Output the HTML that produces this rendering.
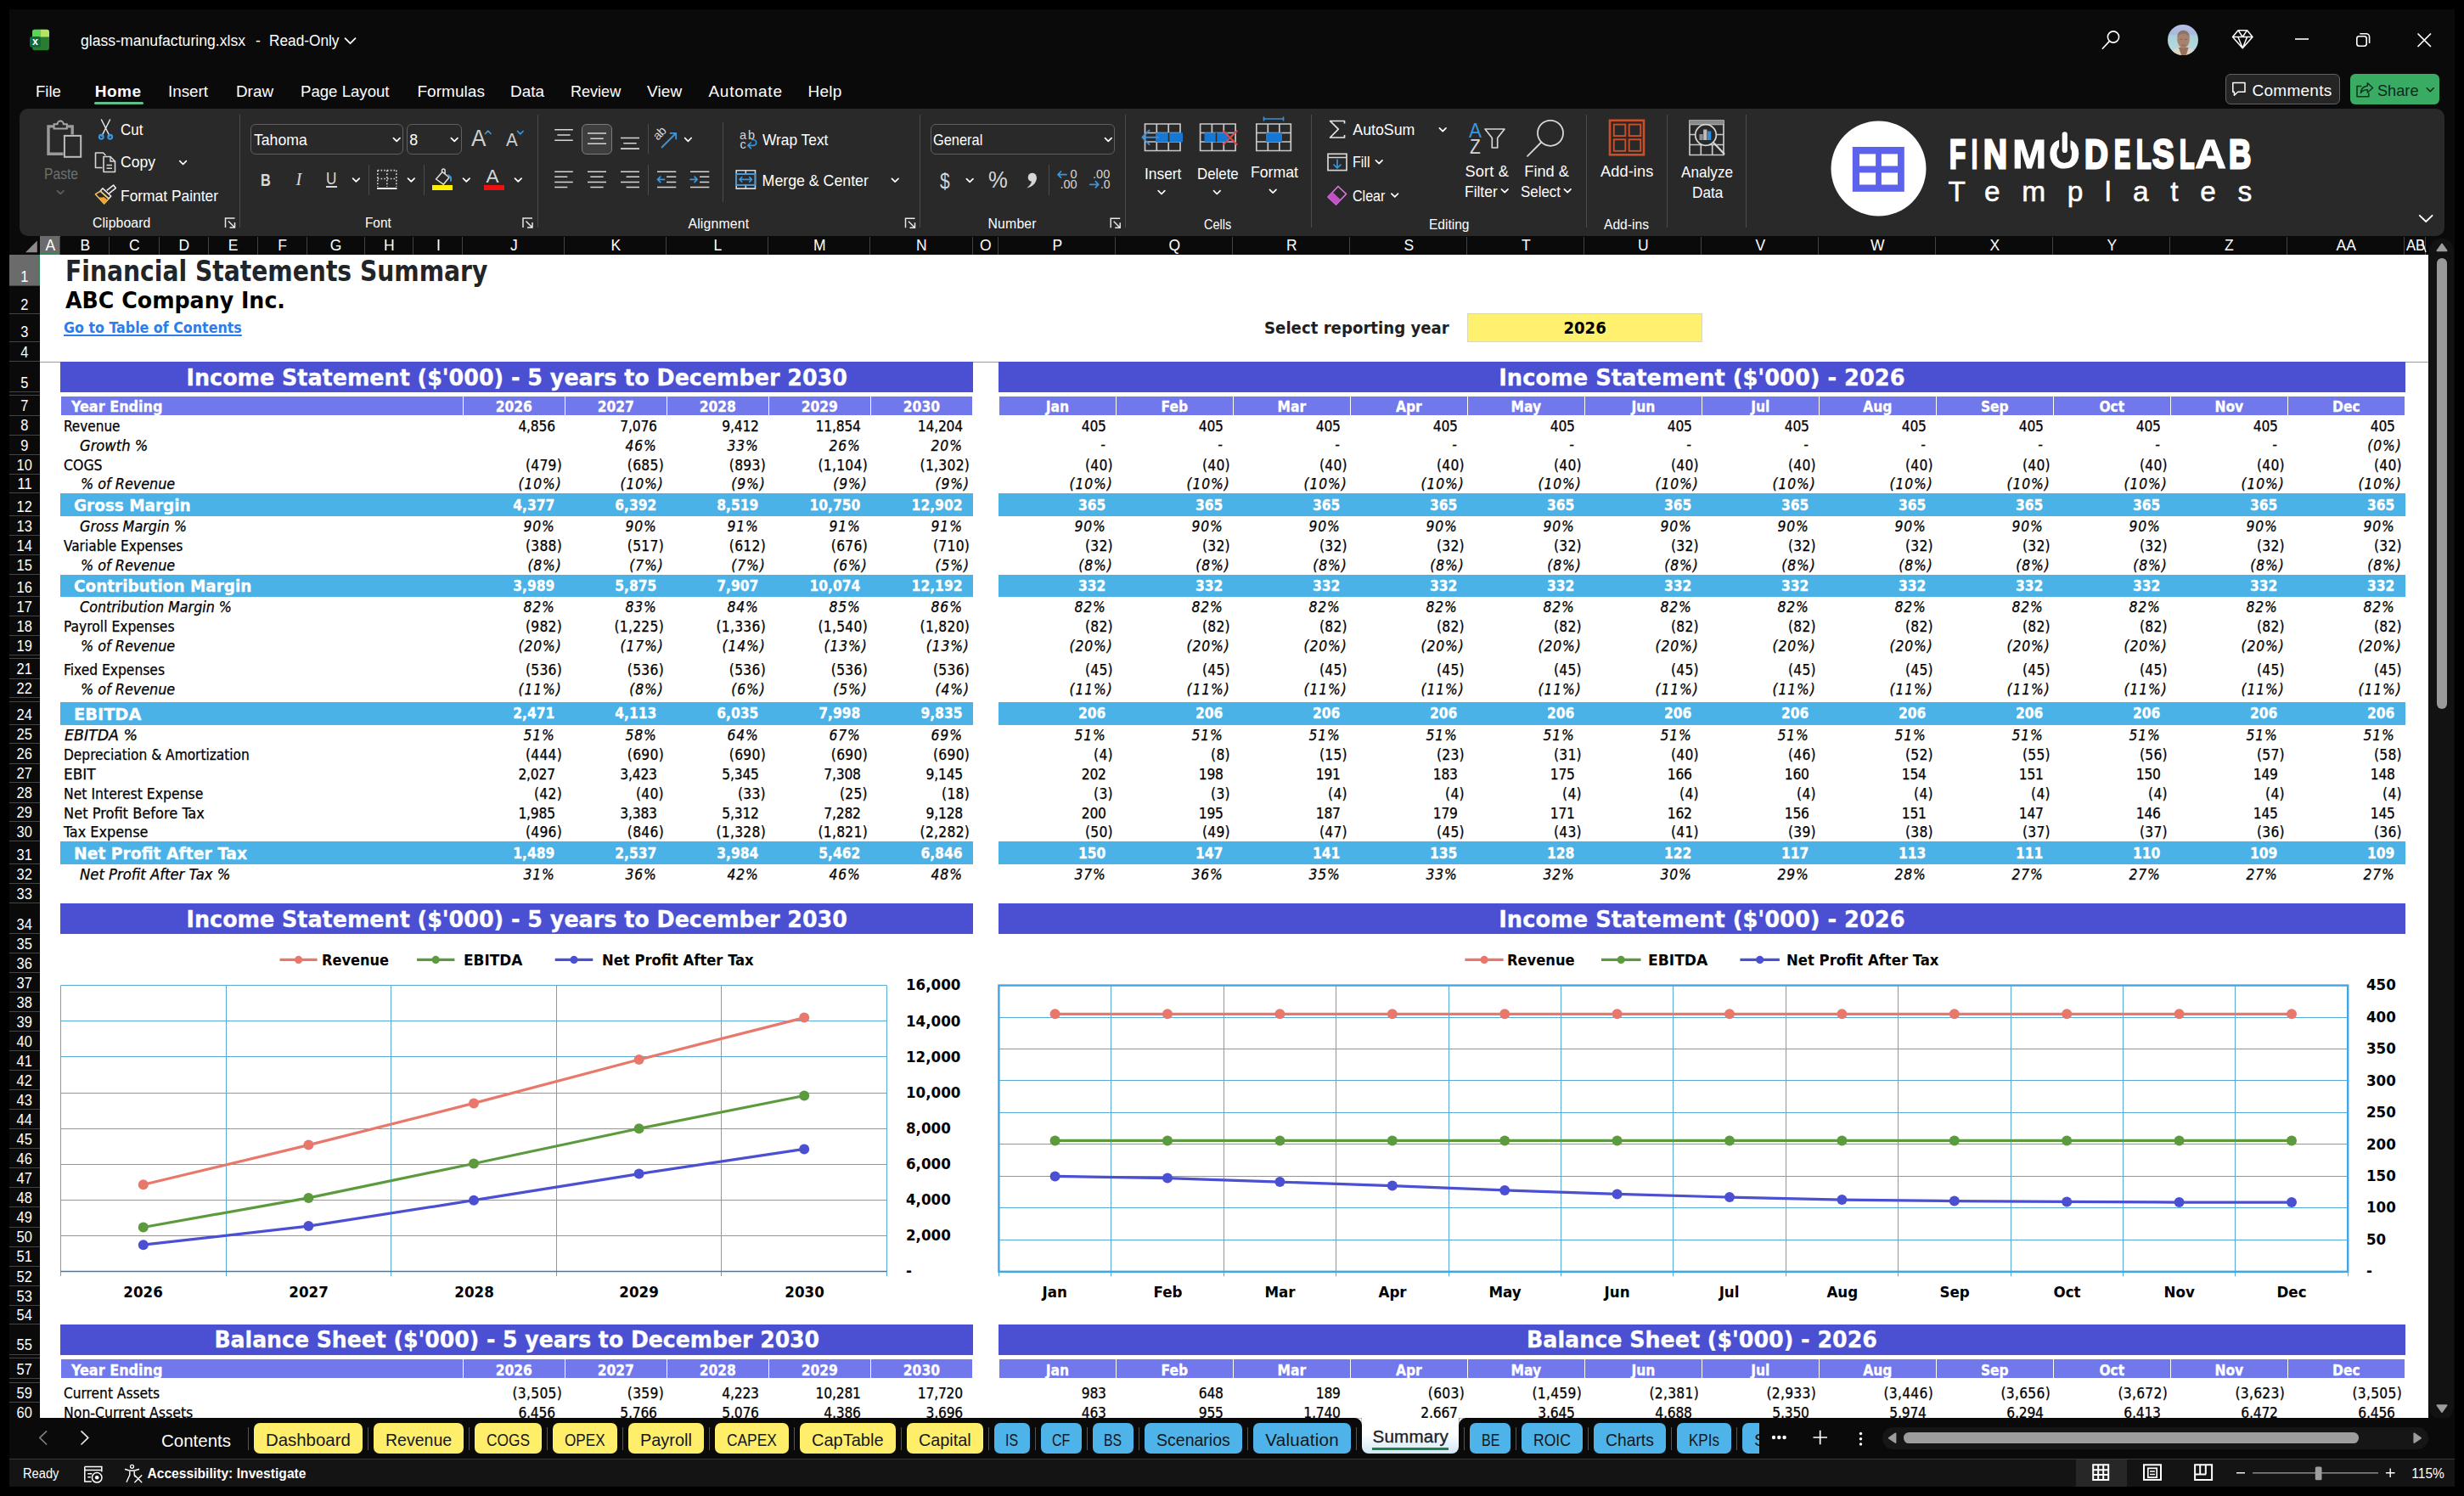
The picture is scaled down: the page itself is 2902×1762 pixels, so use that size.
<!DOCTYPE html>
<html lang="en"><head><meta charset="utf-8"><title>glass-manufacturing.xlsx - Excel</title>
<style>
html,body{margin:0;padding:0;background:#000;}
body{width:2902px;height:1762px;position:relative;overflow:hidden;font-family:'Liberation Sans',sans-serif;}
div{box-sizing:border-box;}
.t{position:absolute;white-space:pre;}
.b{position:absolute;}
.t0{font:17.6px/23px 'Liberation Sans',sans-serif;color:#fff;}
.t1{font:19px/25px 'Liberation Sans',sans-serif;color:#fff;}
.t2{font:normal bold 19px/25px 'Liberation Sans',sans-serif;color:#fff;}
.t3{font:19px/25px 'Liberation Sans',sans-serif;color:#0e2a18;}
.t4{font:17.5px/23px 'Liberation Sans',sans-serif;color:#fff;}
.t5{font:normal bold 33.5px/44px 'DejaVu Sans Condensed','DejaVu Sans','Liberation Sans',sans-serif;font-stretch:condensed;color:#212529;}
.t6{font:normal bold 26.5px/34px 'DejaVu Sans Condensed','DejaVu Sans','Liberation Sans',sans-serif;font-stretch:condensed;color:#000;}
.t7{font:normal bold 17.25px/22px 'DejaVu Sans Condensed','DejaVu Sans','Liberation Sans',sans-serif;font-stretch:condensed;color:#2b7de9;text-decoration:underline;text-decoration-thickness:1.5px;text-underline-offset:2px;}
.t8{font:normal bold 20.1px/26px 'DejaVu Sans Condensed','DejaVu Sans','Liberation Sans',sans-serif;font-stretch:condensed;color:#1f1f1f;}
.t9{font:normal bold 20.1px/26px 'DejaVu Sans Condensed','DejaVu Sans','Liberation Sans',sans-serif;font-stretch:condensed;color:#000;}
.t10{font:normal bold 26.8px/35px 'DejaVu Sans Condensed','DejaVu Sans','Liberation Sans',sans-serif;font-stretch:condensed;color:#fff;-webkit-text-stroke:0.300px #fff;}
.t11{font:normal bold 17.25px/22px 'DejaVu Sans Condensed','DejaVu Sans','Liberation Sans',sans-serif;font-stretch:condensed;color:#fff;-webkit-text-stroke:0.300px #fff;}
.t12{font:17.25px/22px 'DejaVu Sans Condensed','DejaVu Sans','Liberation Sans',sans-serif;font-stretch:condensed;color:#000;-webkit-text-stroke:0.250px #000;}
.t13{font:italic normal 17.25px/22px 'DejaVu Sans Condensed','DejaVu Sans','Liberation Sans',sans-serif;font-stretch:condensed;color:#000;-webkit-text-stroke:0.250px #000;}
.t14{font:normal bold 20.1px/26px 'DejaVu Sans Condensed','DejaVu Sans','Liberation Sans',sans-serif;font-stretch:condensed;color:#fff;-webkit-text-stroke:0.300px #fff;}
.t15{font:normal bold 18px/23px 'DejaVu Sans Condensed','DejaVu Sans','Liberation Sans',sans-serif;font-stretch:condensed;color:#000;}
.t16{font:18.400000000000002px/24px 'Liberation Sans',sans-serif;color:#6f6f6f;}
.t17{font:17.8px/23px 'Liberation Sans',sans-serif;color:#fff;}
.t18{font:15.8px/21px 'Liberation Sans',sans-serif;color:#fff;}
.t19{font:27.5px/36px 'Liberation Sans',sans-serif;color:#cfcfcf;}
.t20{font:21.5px/28px 'Liberation Sans',sans-serif;color:#cfcfcf;}
.t21{font:normal bold 20.5px/27px 'Liberation Sans',sans-serif;color:#d9d9d9;}
.t22{font:italic normal 20.5px/27px 'Liberation Serif',serif;color:#d9d9d9;}
.t23{font:19.5px/25px 'Liberation Sans',sans-serif;color:#d9d9d9;}
.t24{font:22.5px/29px 'Liberation Sans',sans-serif;color:#d6d6d6;}
.t25{font:14.5px/19px 'Liberation Sans',sans-serif;color:#d6d6d6;}
.t26{font:26px/34px 'Liberation Sans',sans-serif;color:#d6d6d6;}
.t27{font:27px/35px 'Liberation Sans',sans-serif;color:#d6d6d6;}
.t28{font:18.2px/24px 'Liberation Sans',sans-serif;color:#fff;}
.t29{font:23px/30px 'Liberation Sans',sans-serif;color:#3a96dd;}
.t30{font:23px/30px 'Liberation Sans',sans-serif;color:#d6d6d6;}
.t31{font:33.5px/44px 'Liberation Sans',sans-serif;color:#fff;-webkit-text-stroke:0.500px #fff;}
.t32{font:20.6px/27px 'Liberation Sans',sans-serif;color:#fff;}
.t33{font:20.6px/27px 'Liberation Sans',sans-serif;color:#14181c;}
.t34{font:20.6px/27px 'Liberation Sans',sans-serif;color:#1d2023;-webkit-text-stroke:0.350px #1d2023;}
.t35{font:15.6px/20px 'Liberation Sans',sans-serif;color:#fff;}
.t36{font:normal bold 15.6px/20px 'Liberation Sans',sans-serif;color:#fff;}
</style></head><body>
<div class="b" style="left:11.0px;top:11.0px;width:2880.0px;height:1740.0px;background:#0a0a0a;"></div>
<div class="t t0" style="left:95.0px;top:37.2px;letter-spacing:0.02px;">glass-manufacturing.xlsx</div>
<div class="t t0" style="left:301.0px;top:37.2px;">-</div>
<div class="t t0" style="left:317.0px;top:37.2px;transform:scaleX(0.9809);transform-origin:0 50%;">Read-Only</div>
<div class="t t1" style="left:42.3px;top:94.9px;transform:scaleX(0.9763);transform-origin:0 50%;">File</div>
<div class="t t2" style="left:111.7px;top:94.9px;letter-spacing:0.53px;">Home</div>
<div class="t t1" style="left:198.2px;top:94.9px;transform:scaleX(0.9888);transform-origin:0 50%;">Insert</div>
<div class="t t1" style="left:277.7px;top:94.9px;transform:scaleX(0.9922);transform-origin:0 50%;">Draw</div>
<div class="t t1" style="left:353.8px;top:94.9px;transform:scaleX(0.9794);transform-origin:0 50%;">Page Layout</div>
<div class="t t1" style="left:491.4px;top:94.9px;letter-spacing:0.06px;">Formulas</div>
<div class="t t1" style="left:600.5px;top:94.9px;transform:scaleX(0.9940);transform-origin:0 50%;">Data</div>
<div class="t t1" style="left:671.8px;top:94.9px;transform:scaleX(0.9501);transform-origin:0 50%;">Review</div>
<div class="t t1" style="left:762.0px;top:94.9px;letter-spacing:0.15px;">View</div>
<div class="t t1" style="left:834.4px;top:94.9px;letter-spacing:0.75px;">Automate</div>
<div class="t t1" style="left:951.6px;top:94.9px;letter-spacing:0.21px;">Help</div>
<div class="b" style="left:111.3px;top:120.2px;width:57.4px;height:2.9px;background:#5fc08b;border-radius:1.5px"></div>
<div class="b" style="left:2621.1px;top:87.0px;width:134.9px;height:35.8px;background:#252525;border:1px solid #616161;border-radius:6px"></div>
<div class="t t1" style="left:2652.4px;top:94.0px;letter-spacing:0.29px;">Comments</div>
<div class="b" style="left:2768.2px;top:87.0px;width:105.0px;height:35.8px;background:#3aab63;border-radius:6px"></div>
<div class="t t3" style="left:2799.5px;top:94.0px;transform:scaleX(0.9565);transform-origin:0 50%;">Share</div>
<div class="b" style="left:47.1px;top:300.2px;width:2813.4px;height:1370.0px;background:#fff;"></div>
<div class="b" style="left:11.0px;top:278.0px;width:2850.0px;height:22.2px;background:#0a0a0a;"></div>
<div class="b" style="left:47.1px;top:278.0px;width:24.3px;height:22.2px;background:#6b6b6b;border-bottom:2px solid #2e8b57"></div>
<div class="t t4" style="left:53.4px;top:278.4px;">A</div>
<div class="b" style="left:70.0px;top:279.0px;width:1.0px;height:21.0px;background:#444;"></div>
<div class="t t4" style="left:94.5px;top:278.4px;">B</div>
<div class="b" style="left:128.0px;top:279.0px;width:1.0px;height:21.0px;background:#444;"></div>
<div class="t t4" style="left:152.1px;top:278.4px;">C</div>
<div class="b" style="left:187.0px;top:279.0px;width:1.0px;height:21.0px;background:#444;"></div>
<div class="t t4" style="left:210.4px;top:278.4px;">D</div>
<div class="b" style="left:245.0px;top:279.0px;width:1.0px;height:21.0px;background:#444;"></div>
<div class="t t4" style="left:268.8px;top:278.4px;">E</div>
<div class="b" style="left:303.0px;top:279.0px;width:1.0px;height:21.0px;background:#444;"></div>
<div class="t t4" style="left:327.2px;top:278.4px;">F</div>
<div class="b" style="left:361.0px;top:279.0px;width:1.0px;height:21.0px;background:#444;"></div>
<div class="t t4" style="left:388.8px;top:278.4px;">G</div>
<div class="b" style="left:429.0px;top:279.0px;width:1.0px;height:21.0px;background:#444;"></div>
<div class="t t4" style="left:452.1px;top:278.4px;">H</div>
<div class="b" style="left:486.0px;top:279.0px;width:1.0px;height:21.0px;background:#444;"></div>
<div class="t t4" style="left:513.9px;top:278.4px;">I</div>
<div class="b" style="left:544.0px;top:279.0px;width:1.0px;height:21.0px;background:#444;"></div>
<div class="t t4" style="left:601.0px;top:278.4px;">J</div>
<div class="b" style="left:664.0px;top:279.0px;width:1.0px;height:21.0px;background:#444;"></div>
<div class="t t4" style="left:719.5px;top:278.4px;">K</div>
<div class="b" style="left:784.0px;top:279.0px;width:1.0px;height:21.0px;background:#444;"></div>
<div class="t t4" style="left:840.4px;top:278.4px;">L</div>
<div class="b" style="left:904.0px;top:279.0px;width:1.0px;height:21.0px;background:#444;"></div>
<div class="t t4" style="left:958.0px;top:278.4px;">M</div>
<div class="b" style="left:1024.0px;top:279.0px;width:1.0px;height:21.0px;background:#444;"></div>
<div class="t t4" style="left:1079.1px;top:278.4px;">N</div>
<div class="b" style="left:1145.0px;top:279.0px;width:1.0px;height:21.0px;background:#444;"></div>
<div class="t t4" style="left:1154.1px;top:278.4px;">O</div>
<div class="b" style="left:1175.0px;top:279.0px;width:1.0px;height:21.0px;background:#444;"></div>
<div class="t t4" style="left:1239.5px;top:278.4px;">P</div>
<div class="b" style="left:1313.0px;top:279.0px;width:1.0px;height:21.0px;background:#444;"></div>
<div class="t t4" style="left:1376.5px;top:278.4px;">Q</div>
<div class="b" style="left:1451.0px;top:279.0px;width:1.0px;height:21.0px;background:#444;"></div>
<div class="t t4" style="left:1515.0px;top:278.4px;">R</div>
<div class="b" style="left:1589.0px;top:279.0px;width:1.0px;height:21.0px;background:#444;"></div>
<div class="t t4" style="left:1653.5px;top:278.4px;">S</div>
<div class="b" style="left:1727.0px;top:279.0px;width:1.0px;height:21.0px;background:#444;"></div>
<div class="t t4" style="left:1791.9px;top:278.4px;">T</div>
<div class="b" style="left:1865.0px;top:279.0px;width:1.0px;height:21.0px;background:#444;"></div>
<div class="t t4" style="left:1929.0px;top:278.4px;">U</div>
<div class="b" style="left:2003.0px;top:279.0px;width:1.0px;height:21.0px;background:#444;"></div>
<div class="t t4" style="left:2067.5px;top:278.4px;">V</div>
<div class="b" style="left:2141.0px;top:279.0px;width:1.0px;height:21.0px;background:#444;"></div>
<div class="t t4" style="left:2203.0px;top:278.4px;">W</div>
<div class="b" style="left:2279.0px;top:279.0px;width:1.0px;height:21.0px;background:#444;"></div>
<div class="t t4" style="left:2343.5px;top:278.4px;">X</div>
<div class="b" style="left:2417.0px;top:279.0px;width:1.0px;height:21.0px;background:#444;"></div>
<div class="t t4" style="left:2481.5px;top:278.4px;">Y</div>
<div class="b" style="left:2555.0px;top:279.0px;width:1.0px;height:21.0px;background:#444;"></div>
<div class="t t4" style="left:2619.9px;top:278.4px;">Z</div>
<div class="b" style="left:2693.0px;top:279.0px;width:1.0px;height:21.0px;background:#444;"></div>
<div class="t t4" style="left:2751.6px;top:278.4px;">AA</div>
<div class="b" style="left:2831.0px;top:279.0px;width:1.0px;height:21.0px;background:#444;"></div>
<div class="t t4" style="left:2833.8px;top:278.4px;transform:scaleX(0.9504);transform-origin:0 50%;">AB</div>
<div class="b" style="left:2856.0px;top:279.0px;width:1.0px;height:21.0px;background:#444;"></div>
<div class="b" style="left:2857.0px;top:278.0px;width:3.5px;height:22.2px;background:#0a0a0a;"></div>
<div class="b" style="left:11.0px;top:300.2px;width:36.1px;height:1370.0px;background:#0a0a0a;"></div>
<div class="b" style="left:11.0px;top:300.2px;width:36.1px;height:36.9px;background:#6b6b6b;border-right:2px solid #2e8b57"></div>
<div class="t t4" style="left:24.1px;top:314.9px;transform:scaleX(0.9400);transform-origin:50% 50%;">1</div>
<div class="b" style="left:11.0px;top:336.0px;width:36.1px;height:1.0px;background:#444;"></div>
<div class="t t4" style="left:24.1px;top:347.5px;transform:scaleX(0.9400);transform-origin:50% 50%;">2</div>
<div class="b" style="left:11.0px;top:369.0px;width:36.1px;height:1.0px;background:#444;"></div>
<div class="t t4" style="left:24.1px;top:380.4px;transform:scaleX(0.9400);transform-origin:50% 50%;">3</div>
<div class="b" style="left:11.0px;top:402.0px;width:36.1px;height:1.0px;background:#444;"></div>
<div class="t t4" style="left:24.1px;top:404.2px;transform:scaleX(0.9400);transform-origin:50% 50%;">4</div>
<div class="b" style="left:11.0px;top:425.0px;width:36.1px;height:1.0px;background:#444;"></div>
<div class="t t4" style="left:24.1px;top:439.8px;transform:scaleX(0.9400);transform-origin:50% 50%;">5</div>
<div class="b" style="left:11.0px;top:461.0px;width:36.1px;height:1.0px;background:#444;"></div>
<div class="b" style="left:11.0px;top:465.0px;width:36.1px;height:1.0px;background:#444;"></div>
<div class="t t4" style="left:24.1px;top:467.3px;transform:scaleX(0.9400);transform-origin:50% 50%;">7</div>
<div class="b" style="left:11.0px;top:489.0px;width:36.1px;height:1.0px;background:#444;"></div>
<div class="t t4" style="left:24.1px;top:490.4px;transform:scaleX(0.9400);transform-origin:50% 50%;">8</div>
<div class="b" style="left:11.0px;top:512.0px;width:36.1px;height:1.0px;background:#444;"></div>
<div class="t t4" style="left:24.1px;top:513.5px;transform:scaleX(0.9400);transform-origin:50% 50%;">9</div>
<div class="b" style="left:11.0px;top:535.0px;width:36.1px;height:1.0px;background:#444;"></div>
<div class="t t4" style="left:19.3px;top:536.6px;transform:scaleX(0.9400);transform-origin:50% 50%;">10</div>
<div class="b" style="left:11.0px;top:558.0px;width:36.1px;height:1.0px;background:#444;"></div>
<div class="t t4" style="left:19.9px;top:559.1px;transform:scaleX(0.9400);transform-origin:50% 50%;">11</div>
<div class="b" style="left:11.0px;top:580.0px;width:36.1px;height:1.0px;background:#444;"></div>
<div class="t t4" style="left:19.3px;top:585.8px;transform:scaleX(0.9400);transform-origin:50% 50%;">12</div>
<div class="b" style="left:11.0px;top:607.0px;width:36.1px;height:1.0px;background:#444;"></div>
<div class="t t4" style="left:19.3px;top:608.8px;transform:scaleX(0.9400);transform-origin:50% 50%;">13</div>
<div class="b" style="left:11.0px;top:630.0px;width:36.1px;height:1.0px;background:#444;"></div>
<div class="t t4" style="left:19.3px;top:631.8px;transform:scaleX(0.9400);transform-origin:50% 50%;">14</div>
<div class="b" style="left:11.0px;top:653.0px;width:36.1px;height:1.0px;background:#444;"></div>
<div class="t t4" style="left:19.3px;top:654.5px;transform:scaleX(0.9400);transform-origin:50% 50%;">15</div>
<div class="b" style="left:11.0px;top:676.0px;width:36.1px;height:1.0px;background:#444;"></div>
<div class="t t4" style="left:19.3px;top:680.8px;transform:scaleX(0.9400);transform-origin:50% 50%;">16</div>
<div class="b" style="left:11.0px;top:702.0px;width:36.1px;height:1.0px;background:#444;"></div>
<div class="t t4" style="left:19.3px;top:703.8px;transform:scaleX(0.9400);transform-origin:50% 50%;">17</div>
<div class="b" style="left:11.0px;top:725.0px;width:36.1px;height:1.0px;background:#444;"></div>
<div class="t t4" style="left:19.3px;top:726.8px;transform:scaleX(0.9400);transform-origin:50% 50%;">18</div>
<div class="b" style="left:11.0px;top:748.0px;width:36.1px;height:1.0px;background:#444;"></div>
<div class="t t4" style="left:19.3px;top:749.8px;transform:scaleX(0.9400);transform-origin:50% 50%;">19</div>
<div class="b" style="left:11.0px;top:771.0px;width:36.1px;height:1.0px;background:#444;"></div>
<div class="b" style="left:11.0px;top:775.0px;width:36.1px;height:1.0px;background:#444;"></div>
<div class="t t4" style="left:19.3px;top:777.3px;transform:scaleX(0.9400);transform-origin:50% 50%;">21</div>
<div class="b" style="left:11.0px;top:799.0px;width:36.1px;height:1.0px;background:#444;"></div>
<div class="t t4" style="left:19.3px;top:800.3px;transform:scaleX(0.9400);transform-origin:50% 50%;">22</div>
<div class="b" style="left:11.0px;top:821.0px;width:36.1px;height:1.0px;background:#444;"></div>
<div class="b" style="left:11.0px;top:826.0px;width:36.1px;height:1.0px;background:#444;"></div>
<div class="t t4" style="left:19.3px;top:831.3px;transform:scaleX(0.9400);transform-origin:50% 50%;">24</div>
<div class="b" style="left:11.0px;top:853.0px;width:36.1px;height:1.0px;background:#444;"></div>
<div class="t t4" style="left:19.3px;top:854.3px;transform:scaleX(0.9400);transform-origin:50% 50%;">25</div>
<div class="b" style="left:11.0px;top:875.0px;width:36.1px;height:1.0px;background:#444;"></div>
<div class="t t4" style="left:19.3px;top:877.3px;transform:scaleX(0.9400);transform-origin:50% 50%;">26</div>
<div class="b" style="left:11.0px;top:899.0px;width:36.1px;height:1.0px;background:#444;"></div>
<div class="t t4" style="left:19.3px;top:900.3px;transform:scaleX(0.9400);transform-origin:50% 50%;">27</div>
<div class="b" style="left:11.0px;top:921.0px;width:36.1px;height:1.0px;background:#444;"></div>
<div class="t t4" style="left:19.3px;top:923.3px;transform:scaleX(0.9400);transform-origin:50% 50%;">28</div>
<div class="b" style="left:11.0px;top:945.0px;width:36.1px;height:1.0px;background:#444;"></div>
<div class="t t4" style="left:19.3px;top:946.3px;transform:scaleX(0.9400);transform-origin:50% 50%;">29</div>
<div class="b" style="left:11.0px;top:967.0px;width:36.1px;height:1.0px;background:#444;"></div>
<div class="t t4" style="left:19.3px;top:969.0px;transform:scaleX(0.9400);transform-origin:50% 50%;">30</div>
<div class="b" style="left:11.0px;top:990.0px;width:36.1px;height:1.0px;background:#444;"></div>
<div class="t t4" style="left:19.3px;top:995.6px;transform:scaleX(0.9400);transform-origin:50% 50%;">31</div>
<div class="b" style="left:11.0px;top:1017.0px;width:36.1px;height:1.0px;background:#444;"></div>
<div class="t t4" style="left:19.3px;top:1018.8px;transform:scaleX(0.9400);transform-origin:50% 50%;">32</div>
<div class="b" style="left:11.0px;top:1040.0px;width:36.1px;height:1.0px;background:#444;"></div>
<div class="t t4" style="left:19.3px;top:1041.8px;transform:scaleX(0.9400);transform-origin:50% 50%;">33</div>
<div class="b" style="left:11.0px;top:1063.0px;width:36.1px;height:1.0px;background:#444;"></div>
<div class="t t4" style="left:19.3px;top:1077.8px;transform:scaleX(0.9400);transform-origin:50% 50%;">34</div>
<div class="b" style="left:11.0px;top:1099.0px;width:36.1px;height:1.0px;background:#444;"></div>
<div class="t t4" style="left:19.3px;top:1100.9px;transform:scaleX(0.9400);transform-origin:50% 50%;">35</div>
<div class="b" style="left:11.0px;top:1122.0px;width:36.1px;height:1.0px;background:#444;"></div>
<div class="t t4" style="left:19.3px;top:1123.9px;transform:scaleX(0.9400);transform-origin:50% 50%;">36</div>
<div class="b" style="left:11.0px;top:1145.0px;width:36.1px;height:1.0px;background:#444;"></div>
<div class="t t4" style="left:19.3px;top:1147.0px;transform:scaleX(0.9400);transform-origin:50% 50%;">37</div>
<div class="b" style="left:11.0px;top:1168.0px;width:36.1px;height:1.0px;background:#444;"></div>
<div class="t t4" style="left:19.3px;top:1170.0px;transform:scaleX(0.9400);transform-origin:50% 50%;">38</div>
<div class="b" style="left:11.0px;top:1191.0px;width:36.1px;height:1.0px;background:#444;"></div>
<div class="t t4" style="left:19.3px;top:1193.0px;transform:scaleX(0.9400);transform-origin:50% 50%;">39</div>
<div class="b" style="left:11.0px;top:1214.0px;width:36.1px;height:1.0px;background:#444;"></div>
<div class="t t4" style="left:19.3px;top:1216.1px;transform:scaleX(0.9400);transform-origin:50% 50%;">40</div>
<div class="b" style="left:11.0px;top:1237.0px;width:36.1px;height:1.0px;background:#444;"></div>
<div class="t t4" style="left:19.3px;top:1239.1px;transform:scaleX(0.9400);transform-origin:50% 50%;">41</div>
<div class="b" style="left:11.0px;top:1260.0px;width:36.1px;height:1.0px;background:#444;"></div>
<div class="t t4" style="left:19.3px;top:1262.1px;transform:scaleX(0.9400);transform-origin:50% 50%;">42</div>
<div class="b" style="left:11.0px;top:1283.0px;width:36.1px;height:1.0px;background:#444;"></div>
<div class="t t4" style="left:19.3px;top:1285.2px;transform:scaleX(0.9400);transform-origin:50% 50%;">43</div>
<div class="b" style="left:11.0px;top:1306.0px;width:36.1px;height:1.0px;background:#444;"></div>
<div class="t t4" style="left:19.3px;top:1308.2px;transform:scaleX(0.9400);transform-origin:50% 50%;">44</div>
<div class="b" style="left:11.0px;top:1329.0px;width:36.1px;height:1.0px;background:#444;"></div>
<div class="t t4" style="left:19.3px;top:1331.2px;transform:scaleX(0.9400);transform-origin:50% 50%;">45</div>
<div class="b" style="left:11.0px;top:1352.0px;width:36.1px;height:1.0px;background:#444;"></div>
<div class="t t4" style="left:19.3px;top:1354.3px;transform:scaleX(0.9400);transform-origin:50% 50%;">46</div>
<div class="b" style="left:11.0px;top:1375.0px;width:36.1px;height:1.0px;background:#444;"></div>
<div class="t t4" style="left:19.3px;top:1377.3px;transform:scaleX(0.9400);transform-origin:50% 50%;">47</div>
<div class="b" style="left:11.0px;top:1398.0px;width:36.1px;height:1.0px;background:#444;"></div>
<div class="t t4" style="left:19.3px;top:1400.3px;transform:scaleX(0.9400);transform-origin:50% 50%;">48</div>
<div class="b" style="left:11.0px;top:1421.0px;width:36.1px;height:1.0px;background:#444;"></div>
<div class="t t4" style="left:19.3px;top:1423.4px;transform:scaleX(0.9400);transform-origin:50% 50%;">49</div>
<div class="b" style="left:11.0px;top:1445.0px;width:36.1px;height:1.0px;background:#444;"></div>
<div class="t t4" style="left:19.3px;top:1446.4px;transform:scaleX(0.9400);transform-origin:50% 50%;">50</div>
<div class="b" style="left:11.0px;top:1468.0px;width:36.1px;height:1.0px;background:#444;"></div>
<div class="t t4" style="left:19.3px;top:1469.4px;transform:scaleX(0.9400);transform-origin:50% 50%;">51</div>
<div class="b" style="left:11.0px;top:1491.0px;width:36.1px;height:1.0px;background:#444;"></div>
<div class="t t4" style="left:19.3px;top:1492.5px;transform:scaleX(0.9400);transform-origin:50% 50%;">52</div>
<div class="b" style="left:11.0px;top:1514.0px;width:36.1px;height:1.0px;background:#444;"></div>
<div class="t t4" style="left:19.3px;top:1515.5px;transform:scaleX(0.9400);transform-origin:50% 50%;">53</div>
<div class="b" style="left:11.0px;top:1537.0px;width:36.1px;height:1.0px;background:#444;"></div>
<div class="t t4" style="left:19.3px;top:1538.2px;transform:scaleX(0.9400);transform-origin:50% 50%;">54</div>
<div class="b" style="left:11.0px;top:1559.0px;width:36.1px;height:1.0px;background:#444;"></div>
<div class="t t4" style="left:19.3px;top:1573.3px;transform:scaleX(0.9400);transform-origin:50% 50%;">55</div>
<div class="b" style="left:11.0px;top:1595.0px;width:36.1px;height:1.0px;background:#444;"></div>
<div class="b" style="left:11.0px;top:1599.0px;width:36.1px;height:1.0px;background:#444;"></div>
<div class="t t4" style="left:19.3px;top:1601.6px;transform:scaleX(0.9400);transform-origin:50% 50%;">57</div>
<div class="b" style="left:11.0px;top:1623.0px;width:36.1px;height:1.0px;background:#444;"></div>
<div class="b" style="left:11.0px;top:1628.0px;width:36.1px;height:1.0px;background:#444;"></div>
<div class="t t4" style="left:19.3px;top:1629.8px;transform:scaleX(0.9400);transform-origin:50% 50%;">59</div>
<div class="b" style="left:11.0px;top:1651.0px;width:36.1px;height:1.0px;background:#444;"></div>
<div class="t t4" style="left:19.3px;top:1652.8px;transform:scaleX(0.9400);transform-origin:50% 50%;">60</div>
<div class="b" style="left:47.1px;top:425.9px;width:2813.4px;height:1.1px;background:#9a9a9a;"></div>
<div class="t t5" style="left:77.3px;top:297.6px;transform:scaleX(0.9353);transform-origin:0 50%;">Financial Statements Summary</div>
<div class="t t6" style="left:77.0px;top:337.4px;transform:scaleX(1.0609);transform-origin:0 50%;">ABC Company Inc.</div>
<div class="t t7" style="left:75.2px;top:374.6px;transform:scaleX(1.0232);transform-origin:0 50%;">Go to Table of Contents</div>
<div class="t t8" style="left:1488.6px;top:373.2px;transform:scaleX(1.0039);transform-origin:0 50%;">Select reporting year</div>
<div class="b" style="left:1728.4px;top:368.9px;width:276.4px;height:33.7px;background:#fff06e;border:1px solid #d8d8c0"></div>
<div class="t t9" style="left:1841.4px;top:373.2px;">2026</div>
<div class="b" style="left:71.4px;top:426.4px;width:1074.3px;height:35.8px;background:#4b50d2;"></div>
<div class="t t10" style="left:238.8px;top:426.6px;transform:scaleX(1.0525);transform-origin:50% 50%;">Income Statement ($&#x27;000) - 5 years to December 2030</div>
<div class="b" style="left:1176.3px;top:426.4px;width:1656.5px;height:35.8px;background:#4b50d2;"></div>
<div class="t t10" style="left:1780.1px;top:426.6px;transform:scaleX(1.0654);transform-origin:50% 50%;">Income Statement ($&#x27;000) - 2026</div>
<div class="b" style="left:72.2px;top:467.3px;width:472.5px;height:21.5px;background:#7078eb;"></div>
<div class="t t11" style="left:83.6px;top:468.2px;transform:scaleX(1.0341);transform-origin:0 50%;">Year Ending</div>
<div class="b" style="left:545.8px;top:467.3px;width:119.0px;height:21.5px;background:#7078eb;"></div>
<div class="t t11" style="left:583.7px;top:468.2px;">2026</div>
<div class="b" style="left:665.9px;top:467.3px;width:118.8px;height:21.5px;background:#7078eb;"></div>
<div class="t t11" style="left:703.7px;top:468.2px;">2027</div>
<div class="b" style="left:785.8px;top:467.3px;width:118.9px;height:21.5px;background:#7078eb;"></div>
<div class="t t11" style="left:823.7px;top:468.2px;">2028</div>
<div class="b" style="left:905.8px;top:467.3px;width:118.9px;height:21.5px;background:#7078eb;"></div>
<div class="t t11" style="left:943.7px;top:468.2px;">2029</div>
<div class="b" style="left:1025.8px;top:467.3px;width:119.1px;height:21.5px;background:#7078eb;"></div>
<div class="t t11" style="left:1063.8px;top:468.2px;">2030</div>
<div class="b" style="left:1176.9px;top:467.3px;width:136.8px;height:21.5px;background:#7078eb;"></div>
<div class="t t11" style="left:1231.7px;top:468.2px;">Jan</div>
<div class="b" style="left:1314.9px;top:467.3px;width:136.8px;height:21.5px;background:#7078eb;"></div>
<div class="t t11" style="left:1367.5px;top:468.2px;">Feb</div>
<div class="b" style="left:1452.9px;top:467.3px;width:136.8px;height:21.5px;background:#7078eb;"></div>
<div class="t t11" style="left:1504.5px;top:468.2px;">Mar</div>
<div class="b" style="left:1590.9px;top:467.3px;width:136.8px;height:21.5px;background:#7078eb;"></div>
<div class="t t11" style="left:1643.9px;top:468.2px;">Apr</div>
<div class="b" style="left:1728.9px;top:467.3px;width:136.8px;height:21.5px;background:#7078eb;"></div>
<div class="t t11" style="left:1779.5px;top:468.2px;">May</div>
<div class="b" style="left:1866.9px;top:467.3px;width:136.8px;height:21.5px;background:#7078eb;"></div>
<div class="t t11" style="left:1921.4px;top:468.2px;">Jun</div>
<div class="b" style="left:2004.9px;top:467.3px;width:136.8px;height:21.5px;background:#7078eb;"></div>
<div class="t t11" style="left:2062.2px;top:468.2px;">Jul</div>
<div class="b" style="left:2142.9px;top:467.3px;width:136.8px;height:21.5px;background:#7078eb;"></div>
<div class="t t11" style="left:2194.2px;top:468.2px;">Aug</div>
<div class="b" style="left:2280.9px;top:467.3px;width:136.8px;height:21.5px;background:#7078eb;"></div>
<div class="t t11" style="left:2332.9px;top:468.2px;">Sep</div>
<div class="b" style="left:2418.9px;top:467.3px;width:136.8px;height:21.5px;background:#7078eb;"></div>
<div class="t t11" style="left:2472.4px;top:468.2px;">Oct</div>
<div class="b" style="left:2556.9px;top:467.3px;width:136.8px;height:21.5px;background:#7078eb;"></div>
<div class="t t11" style="left:2608.4px;top:468.2px;">Nov</div>
<div class="b" style="left:2694.9px;top:467.3px;width:136.8px;height:21.5px;background:#7078eb;"></div>
<div class="t t11" style="left:2747.0px;top:468.2px;">Dec</div>
<div class="t t12" style="left:75.4px;top:490.6px;transform:scaleX(0.9847);transform-origin:0 50%;">Revenue</div>
<div class="t t12" style="left:610.4px;top:490.6px;letter-spacing:-0.18px;">4,856</div>
<div class="t t12" style="left:730.3px;top:490.6px;letter-spacing:-0.18px;">7,076</div>
<div class="t t12" style="left:850.3px;top:490.6px;letter-spacing:-0.18px;">9,412</div>
<div class="t t12" style="left:960.6px;top:490.6px;letter-spacing:-0.18px;">11,854</div>
<div class="t t12" style="left:1080.8px;top:490.6px;letter-spacing:-0.18px;">14,204</div>
<div class="t t12" style="left:1273.7px;top:490.6px;letter-spacing:-0.18px;">405</div>
<div class="t t12" style="left:1411.7px;top:490.6px;letter-spacing:-0.18px;">405</div>
<div class="t t12" style="left:1549.7px;top:490.6px;letter-spacing:-0.18px;">405</div>
<div class="t t12" style="left:1687.7px;top:490.6px;letter-spacing:-0.18px;">405</div>
<div class="t t12" style="left:1825.7px;top:490.6px;letter-spacing:-0.18px;">405</div>
<div class="t t12" style="left:1963.7px;top:490.6px;letter-spacing:-0.18px;">405</div>
<div class="t t12" style="left:2101.7px;top:490.6px;letter-spacing:-0.18px;">405</div>
<div class="t t12" style="left:2239.7px;top:490.6px;letter-spacing:-0.18px;">405</div>
<div class="t t12" style="left:2377.7px;top:490.6px;letter-spacing:-0.18px;">405</div>
<div class="t t12" style="left:2515.7px;top:490.6px;letter-spacing:-0.18px;">405</div>
<div class="t t12" style="left:2653.7px;top:490.6px;letter-spacing:-0.18px;">405</div>
<div class="t t12" style="left:2791.7px;top:490.6px;letter-spacing:-0.18px;">405</div>
<div class="t t13" style="left:93.8px;top:513.7px;transform:scaleX(1.0527);transform-origin:0 50%;">Growth %</div>
<div class="t t13" style="left:736.4px;top:513.7px;letter-spacing:0.90px;">46%</div>
<div class="t t13" style="left:856.4px;top:513.7px;letter-spacing:0.90px;">33%</div>
<div class="t t13" style="left:976.4px;top:513.7px;letter-spacing:0.90px;">26%</div>
<div class="t t13" style="left:1096.6px;top:513.7px;letter-spacing:0.90px;">20%</div>
<div class="t t13" style="left:1296.2px;top:511.9px;letter-spacing:0.90px;">-</div>
<div class="t t13" style="left:1434.2px;top:511.9px;letter-spacing:0.90px;">-</div>
<div class="t t13" style="left:1572.2px;top:511.9px;letter-spacing:0.90px;">-</div>
<div class="t t13" style="left:1710.2px;top:511.9px;letter-spacing:0.90px;">-</div>
<div class="t t13" style="left:1848.2px;top:511.9px;letter-spacing:0.90px;">-</div>
<div class="t t13" style="left:1986.2px;top:511.9px;letter-spacing:0.90px;">-</div>
<div class="t t13" style="left:2124.2px;top:511.9px;letter-spacing:0.90px;">-</div>
<div class="t t13" style="left:2262.2px;top:511.9px;letter-spacing:0.90px;">-</div>
<div class="t t13" style="left:2400.2px;top:511.9px;letter-spacing:0.90px;">-</div>
<div class="t t13" style="left:2538.2px;top:511.9px;letter-spacing:0.90px;">-</div>
<div class="t t13" style="left:2676.2px;top:511.9px;letter-spacing:0.90px;">-</div>
<div class="t t13" style="left:2788.3px;top:513.7px;letter-spacing:0.90px;">(0%)</div>
<div class="t t12" style="left:75.4px;top:536.8px;transform:scaleX(1.0147);transform-origin:0 50%;">COGS</div>
<div class="t t12" style="left:618.9px;top:536.8px;letter-spacing:0.30px;">(479)</div>
<div class="t t12" style="left:738.8px;top:536.8px;letter-spacing:0.30px;">(685)</div>
<div class="t t12" style="left:858.8px;top:536.8px;letter-spacing:0.30px;">(893)</div>
<div class="t t12" style="left:963.4px;top:536.8px;letter-spacing:0.30px;">(1,104)</div>
<div class="t t12" style="left:1083.6px;top:536.8px;letter-spacing:0.30px;">(1,302)</div>
<div class="t t12" style="left:1277.9px;top:536.8px;letter-spacing:0.30px;">(40)</div>
<div class="t t12" style="left:1415.9px;top:536.8px;letter-spacing:0.30px;">(40)</div>
<div class="t t12" style="left:1553.9px;top:536.8px;letter-spacing:0.30px;">(40)</div>
<div class="t t12" style="left:1691.9px;top:536.8px;letter-spacing:0.30px;">(40)</div>
<div class="t t12" style="left:1829.9px;top:536.8px;letter-spacing:0.30px;">(40)</div>
<div class="t t12" style="left:1967.9px;top:536.8px;letter-spacing:0.30px;">(40)</div>
<div class="t t12" style="left:2105.9px;top:536.8px;letter-spacing:0.30px;">(40)</div>
<div class="t t12" style="left:2243.9px;top:536.8px;letter-spacing:0.30px;">(40)</div>
<div class="t t12" style="left:2381.9px;top:536.8px;letter-spacing:0.30px;">(40)</div>
<div class="t t12" style="left:2519.9px;top:536.8px;letter-spacing:0.30px;">(40)</div>
<div class="t t12" style="left:2657.9px;top:536.8px;letter-spacing:0.30px;">(40)</div>
<div class="t t12" style="left:2795.9px;top:536.8px;letter-spacing:0.30px;">(40)</div>
<div class="t t13" style="left:95.4px;top:559.3px;transform:scaleX(1.0310);transform-origin:0 50%;">% of Revenue</div>
<div class="t t13" style="left:610.6px;top:559.3px;letter-spacing:0.90px;">(10%)</div>
<div class="t t13" style="left:730.5px;top:559.3px;letter-spacing:0.90px;">(10%)</div>
<div class="t t13" style="left:861.3px;top:559.3px;letter-spacing:0.90px;">(9%)</div>
<div class="t t13" style="left:981.3px;top:559.3px;letter-spacing:0.90px;">(9%)</div>
<div class="t t13" style="left:1101.5px;top:559.3px;letter-spacing:0.90px;">(9%)</div>
<div class="t t13" style="left:1259.5px;top:559.3px;letter-spacing:0.90px;">(10%)</div>
<div class="t t13" style="left:1397.5px;top:559.3px;letter-spacing:0.90px;">(10%)</div>
<div class="t t13" style="left:1535.5px;top:559.3px;letter-spacing:0.90px;">(10%)</div>
<div class="t t13" style="left:1673.5px;top:559.3px;letter-spacing:0.90px;">(10%)</div>
<div class="t t13" style="left:1811.5px;top:559.3px;letter-spacing:0.90px;">(10%)</div>
<div class="t t13" style="left:1949.5px;top:559.3px;letter-spacing:0.90px;">(10%)</div>
<div class="t t13" style="left:2087.5px;top:559.3px;letter-spacing:0.90px;">(10%)</div>
<div class="t t13" style="left:2225.5px;top:559.3px;letter-spacing:0.90px;">(10%)</div>
<div class="t t13" style="left:2363.5px;top:559.3px;letter-spacing:0.90px;">(10%)</div>
<div class="t t13" style="left:2501.5px;top:559.3px;letter-spacing:0.90px;">(10%)</div>
<div class="t t13" style="left:2639.5px;top:559.3px;letter-spacing:0.90px;">(10%)</div>
<div class="t t13" style="left:2777.5px;top:559.3px;letter-spacing:0.90px;">(10%)</div>
<div class="b" style="left:71.4px;top:581.3px;width:1074.3px;height:26.9px;background:#4ab2e7;"></div>
<div class="b" style="left:1176.3px;top:581.3px;width:1656.5px;height:26.9px;background:#4ab2e7;"></div>
<div class="t t14" style="left:86.6px;top:582.4px;transform:scaleX(1.0184);transform-origin:0 50%;">Gross Margin</div>
<div class="t t11" style="left:604.3px;top:583.7px;">4,377</div>
<div class="t t11" style="left:724.2px;top:583.7px;">6,392</div>
<div class="t t11" style="left:844.2px;top:583.7px;">8,519</div>
<div class="t t11" style="left:953.4px;top:583.7px;">10,750</div>
<div class="t t11" style="left:1073.6px;top:583.7px;">12,902</div>
<div class="t t11" style="left:1269.9px;top:583.7px;">365</div>
<div class="t t11" style="left:1407.9px;top:583.7px;">365</div>
<div class="t t11" style="left:1545.9px;top:583.7px;">365</div>
<div class="t t11" style="left:1683.9px;top:583.7px;">365</div>
<div class="t t11" style="left:1821.9px;top:583.7px;">365</div>
<div class="t t11" style="left:1959.9px;top:583.7px;">365</div>
<div class="t t11" style="left:2097.9px;top:583.7px;">365</div>
<div class="t t11" style="left:2235.9px;top:583.7px;">365</div>
<div class="t t11" style="left:2373.9px;top:583.7px;">365</div>
<div class="t t11" style="left:2511.9px;top:583.7px;">365</div>
<div class="t t11" style="left:2649.9px;top:583.7px;">365</div>
<div class="t t11" style="left:2787.9px;top:583.7px;">365</div>
<div class="t t13" style="left:93.8px;top:609.0px;transform:scaleX(1.0331);transform-origin:0 50%;">Gross Margin %</div>
<div class="t t13" style="left:616.5px;top:609.0px;letter-spacing:0.90px;">90%</div>
<div class="t t13" style="left:736.4px;top:609.0px;letter-spacing:0.90px;">90%</div>
<div class="t t13" style="left:856.4px;top:609.0px;letter-spacing:0.90px;">91%</div>
<div class="t t13" style="left:976.4px;top:609.0px;letter-spacing:0.90px;">91%</div>
<div class="t t13" style="left:1096.6px;top:609.0px;letter-spacing:0.90px;">91%</div>
<div class="t t13" style="left:1265.4px;top:609.0px;letter-spacing:0.90px;">90%</div>
<div class="t t13" style="left:1403.4px;top:609.0px;letter-spacing:0.90px;">90%</div>
<div class="t t13" style="left:1541.4px;top:609.0px;letter-spacing:0.90px;">90%</div>
<div class="t t13" style="left:1679.4px;top:609.0px;letter-spacing:0.90px;">90%</div>
<div class="t t13" style="left:1817.4px;top:609.0px;letter-spacing:0.90px;">90%</div>
<div class="t t13" style="left:1955.4px;top:609.0px;letter-spacing:0.90px;">90%</div>
<div class="t t13" style="left:2093.4px;top:609.0px;letter-spacing:0.90px;">90%</div>
<div class="t t13" style="left:2231.4px;top:609.0px;letter-spacing:0.90px;">90%</div>
<div class="t t13" style="left:2369.4px;top:609.0px;letter-spacing:0.90px;">90%</div>
<div class="t t13" style="left:2507.4px;top:609.0px;letter-spacing:0.90px;">90%</div>
<div class="t t13" style="left:2645.4px;top:609.0px;letter-spacing:0.90px;">90%</div>
<div class="t t13" style="left:2783.4px;top:609.0px;letter-spacing:0.90px;">90%</div>
<div class="t t12" style="left:75.4px;top:632.0px;transform:scaleX(0.9909);transform-origin:0 50%;">Variable Expenses</div>
<div class="t t12" style="left:618.9px;top:632.0px;letter-spacing:0.30px;">(388)</div>
<div class="t t12" style="left:738.8px;top:632.0px;letter-spacing:0.30px;">(517)</div>
<div class="t t12" style="left:858.8px;top:632.0px;letter-spacing:0.30px;">(612)</div>
<div class="t t12" style="left:978.8px;top:632.0px;letter-spacing:0.30px;">(676)</div>
<div class="t t12" style="left:1099.0px;top:632.0px;letter-spacing:0.30px;">(710)</div>
<div class="t t12" style="left:1277.9px;top:632.0px;letter-spacing:0.30px;">(32)</div>
<div class="t t12" style="left:1415.9px;top:632.0px;letter-spacing:0.30px;">(32)</div>
<div class="t t12" style="left:1553.9px;top:632.0px;letter-spacing:0.30px;">(32)</div>
<div class="t t12" style="left:1691.9px;top:632.0px;letter-spacing:0.30px;">(32)</div>
<div class="t t12" style="left:1829.9px;top:632.0px;letter-spacing:0.30px;">(32)</div>
<div class="t t12" style="left:1967.9px;top:632.0px;letter-spacing:0.30px;">(32)</div>
<div class="t t12" style="left:2105.9px;top:632.0px;letter-spacing:0.30px;">(32)</div>
<div class="t t12" style="left:2243.9px;top:632.0px;letter-spacing:0.30px;">(32)</div>
<div class="t t12" style="left:2381.9px;top:632.0px;letter-spacing:0.30px;">(32)</div>
<div class="t t12" style="left:2519.9px;top:632.0px;letter-spacing:0.30px;">(32)</div>
<div class="t t12" style="left:2657.9px;top:632.0px;letter-spacing:0.30px;">(32)</div>
<div class="t t12" style="left:2795.9px;top:632.0px;letter-spacing:0.30px;">(32)</div>
<div class="t t13" style="left:95.4px;top:654.7px;transform:scaleX(1.0310);transform-origin:0 50%;">% of Revenue</div>
<div class="t t13" style="left:621.4px;top:654.7px;letter-spacing:0.90px;">(8%)</div>
<div class="t t13" style="left:741.3px;top:654.7px;letter-spacing:0.90px;">(7%)</div>
<div class="t t13" style="left:861.3px;top:654.7px;letter-spacing:0.90px;">(7%)</div>
<div class="t t13" style="left:981.3px;top:654.7px;letter-spacing:0.90px;">(6%)</div>
<div class="t t13" style="left:1101.5px;top:654.7px;letter-spacing:0.90px;">(5%)</div>
<div class="t t13" style="left:1270.3px;top:654.7px;letter-spacing:0.90px;">(8%)</div>
<div class="t t13" style="left:1408.3px;top:654.7px;letter-spacing:0.90px;">(8%)</div>
<div class="t t13" style="left:1546.3px;top:654.7px;letter-spacing:0.90px;">(8%)</div>
<div class="t t13" style="left:1684.3px;top:654.7px;letter-spacing:0.90px;">(8%)</div>
<div class="t t13" style="left:1822.3px;top:654.7px;letter-spacing:0.90px;">(8%)</div>
<div class="t t13" style="left:1960.3px;top:654.7px;letter-spacing:0.90px;">(8%)</div>
<div class="t t13" style="left:2098.3px;top:654.7px;letter-spacing:0.90px;">(8%)</div>
<div class="t t13" style="left:2236.3px;top:654.7px;letter-spacing:0.90px;">(8%)</div>
<div class="t t13" style="left:2374.3px;top:654.7px;letter-spacing:0.90px;">(8%)</div>
<div class="t t13" style="left:2512.3px;top:654.7px;letter-spacing:0.90px;">(8%)</div>
<div class="t t13" style="left:2650.3px;top:654.7px;letter-spacing:0.90px;">(8%)</div>
<div class="t t13" style="left:2788.3px;top:654.7px;letter-spacing:0.90px;">(8%)</div>
<div class="b" style="left:71.4px;top:676.7px;width:1074.3px;height:26.5px;background:#4ab2e7;"></div>
<div class="b" style="left:1176.3px;top:676.7px;width:1656.5px;height:26.5px;background:#4ab2e7;"></div>
<div class="t t14" style="left:86.6px;top:677.4px;transform:scaleX(1.0181);transform-origin:0 50%;">Contribution Margin</div>
<div class="t t11" style="left:604.3px;top:678.7px;">3,989</div>
<div class="t t11" style="left:724.2px;top:678.7px;">5,875</div>
<div class="t t11" style="left:844.2px;top:678.7px;">7,907</div>
<div class="t t11" style="left:953.4px;top:678.7px;">10,074</div>
<div class="t t11" style="left:1073.6px;top:678.7px;">12,192</div>
<div class="t t11" style="left:1269.9px;top:678.7px;">332</div>
<div class="t t11" style="left:1407.9px;top:678.7px;">332</div>
<div class="t t11" style="left:1545.9px;top:678.7px;">332</div>
<div class="t t11" style="left:1683.9px;top:678.7px;">332</div>
<div class="t t11" style="left:1821.9px;top:678.7px;">332</div>
<div class="t t11" style="left:1959.9px;top:678.7px;">332</div>
<div class="t t11" style="left:2097.9px;top:678.7px;">332</div>
<div class="t t11" style="left:2235.9px;top:678.7px;">332</div>
<div class="t t11" style="left:2373.9px;top:678.7px;">332</div>
<div class="t t11" style="left:2511.9px;top:678.7px;">332</div>
<div class="t t11" style="left:2649.9px;top:678.7px;">332</div>
<div class="t t11" style="left:2787.9px;top:678.7px;">332</div>
<div class="t t13" style="left:93.8px;top:704.0px;transform:scaleX(1.0273);transform-origin:0 50%;">Contribution Margin %</div>
<div class="t t13" style="left:616.5px;top:704.0px;letter-spacing:0.90px;">82%</div>
<div class="t t13" style="left:736.4px;top:704.0px;letter-spacing:0.90px;">83%</div>
<div class="t t13" style="left:856.4px;top:704.0px;letter-spacing:0.90px;">84%</div>
<div class="t t13" style="left:976.4px;top:704.0px;letter-spacing:0.90px;">85%</div>
<div class="t t13" style="left:1096.6px;top:704.0px;letter-spacing:0.90px;">86%</div>
<div class="t t13" style="left:1265.4px;top:704.0px;letter-spacing:0.90px;">82%</div>
<div class="t t13" style="left:1403.4px;top:704.0px;letter-spacing:0.90px;">82%</div>
<div class="t t13" style="left:1541.4px;top:704.0px;letter-spacing:0.90px;">82%</div>
<div class="t t13" style="left:1679.4px;top:704.0px;letter-spacing:0.90px;">82%</div>
<div class="t t13" style="left:1817.4px;top:704.0px;letter-spacing:0.90px;">82%</div>
<div class="t t13" style="left:1955.4px;top:704.0px;letter-spacing:0.90px;">82%</div>
<div class="t t13" style="left:2093.4px;top:704.0px;letter-spacing:0.90px;">82%</div>
<div class="t t13" style="left:2231.4px;top:704.0px;letter-spacing:0.90px;">82%</div>
<div class="t t13" style="left:2369.4px;top:704.0px;letter-spacing:0.90px;">82%</div>
<div class="t t13" style="left:2507.4px;top:704.0px;letter-spacing:0.90px;">82%</div>
<div class="t t13" style="left:2645.4px;top:704.0px;letter-spacing:0.90px;">82%</div>
<div class="t t13" style="left:2783.4px;top:704.0px;letter-spacing:0.90px;">82%</div>
<div class="t t12" style="left:75.4px;top:727.0px;transform:scaleX(1.0017);transform-origin:0 50%;">Payroll Expenses</div>
<div class="t t12" style="left:618.9px;top:727.0px;letter-spacing:0.30px;">(982)</div>
<div class="t t12" style="left:723.4px;top:727.0px;letter-spacing:0.30px;">(1,225)</div>
<div class="t t12" style="left:843.4px;top:727.0px;letter-spacing:0.30px;">(1,336)</div>
<div class="t t12" style="left:963.4px;top:727.0px;letter-spacing:0.30px;">(1,540)</div>
<div class="t t12" style="left:1083.6px;top:727.0px;letter-spacing:0.30px;">(1,820)</div>
<div class="t t12" style="left:1277.9px;top:727.0px;letter-spacing:0.30px;">(82)</div>
<div class="t t12" style="left:1415.9px;top:727.0px;letter-spacing:0.30px;">(82)</div>
<div class="t t12" style="left:1553.9px;top:727.0px;letter-spacing:0.30px;">(82)</div>
<div class="t t12" style="left:1691.9px;top:727.0px;letter-spacing:0.30px;">(82)</div>
<div class="t t12" style="left:1829.9px;top:727.0px;letter-spacing:0.30px;">(82)</div>
<div class="t t12" style="left:1967.9px;top:727.0px;letter-spacing:0.30px;">(82)</div>
<div class="t t12" style="left:2105.9px;top:727.0px;letter-spacing:0.30px;">(82)</div>
<div class="t t12" style="left:2243.9px;top:727.0px;letter-spacing:0.30px;">(82)</div>
<div class="t t12" style="left:2381.9px;top:727.0px;letter-spacing:0.30px;">(82)</div>
<div class="t t12" style="left:2519.9px;top:727.0px;letter-spacing:0.30px;">(82)</div>
<div class="t t12" style="left:2657.9px;top:727.0px;letter-spacing:0.30px;">(82)</div>
<div class="t t12" style="left:2795.9px;top:727.0px;letter-spacing:0.30px;">(82)</div>
<div class="t t13" style="left:95.4px;top:750.0px;transform:scaleX(1.0310);transform-origin:0 50%;">% of Revenue</div>
<div class="t t13" style="left:610.6px;top:750.0px;letter-spacing:0.90px;">(20%)</div>
<div class="t t13" style="left:730.5px;top:750.0px;letter-spacing:0.90px;">(17%)</div>
<div class="t t13" style="left:850.5px;top:750.0px;letter-spacing:0.90px;">(14%)</div>
<div class="t t13" style="left:970.5px;top:750.0px;letter-spacing:0.90px;">(13%)</div>
<div class="t t13" style="left:1090.7px;top:750.0px;letter-spacing:0.90px;">(13%)</div>
<div class="t t13" style="left:1259.5px;top:750.0px;letter-spacing:0.90px;">(20%)</div>
<div class="t t13" style="left:1397.5px;top:750.0px;letter-spacing:0.90px;">(20%)</div>
<div class="t t13" style="left:1535.5px;top:750.0px;letter-spacing:0.90px;">(20%)</div>
<div class="t t13" style="left:1673.5px;top:750.0px;letter-spacing:0.90px;">(20%)</div>
<div class="t t13" style="left:1811.5px;top:750.0px;letter-spacing:0.90px;">(20%)</div>
<div class="t t13" style="left:1949.5px;top:750.0px;letter-spacing:0.90px;">(20%)</div>
<div class="t t13" style="left:2087.5px;top:750.0px;letter-spacing:0.90px;">(20%)</div>
<div class="t t13" style="left:2225.5px;top:750.0px;letter-spacing:0.90px;">(20%)</div>
<div class="t t13" style="left:2363.5px;top:750.0px;letter-spacing:0.90px;">(20%)</div>
<div class="t t13" style="left:2501.5px;top:750.0px;letter-spacing:0.90px;">(20%)</div>
<div class="t t13" style="left:2639.5px;top:750.0px;letter-spacing:0.90px;">(20%)</div>
<div class="t t13" style="left:2777.5px;top:750.0px;letter-spacing:0.90px;">(20%)</div>
<div class="t t12" style="left:75.4px;top:777.5px;transform:scaleX(1.0005);transform-origin:0 50%;">Fixed Expenses</div>
<div class="t t12" style="left:618.9px;top:777.5px;letter-spacing:0.30px;">(536)</div>
<div class="t t12" style="left:738.8px;top:777.5px;letter-spacing:0.30px;">(536)</div>
<div class="t t12" style="left:858.8px;top:777.5px;letter-spacing:0.30px;">(536)</div>
<div class="t t12" style="left:978.8px;top:777.5px;letter-spacing:0.30px;">(536)</div>
<div class="t t12" style="left:1099.0px;top:777.5px;letter-spacing:0.30px;">(536)</div>
<div class="t t12" style="left:1277.9px;top:777.5px;letter-spacing:0.30px;">(45)</div>
<div class="t t12" style="left:1415.9px;top:777.5px;letter-spacing:0.30px;">(45)</div>
<div class="t t12" style="left:1553.9px;top:777.5px;letter-spacing:0.30px;">(45)</div>
<div class="t t12" style="left:1691.9px;top:777.5px;letter-spacing:0.30px;">(45)</div>
<div class="t t12" style="left:1829.9px;top:777.5px;letter-spacing:0.30px;">(45)</div>
<div class="t t12" style="left:1967.9px;top:777.5px;letter-spacing:0.30px;">(45)</div>
<div class="t t12" style="left:2105.9px;top:777.5px;letter-spacing:0.30px;">(45)</div>
<div class="t t12" style="left:2243.9px;top:777.5px;letter-spacing:0.30px;">(45)</div>
<div class="t t12" style="left:2381.9px;top:777.5px;letter-spacing:0.30px;">(45)</div>
<div class="t t12" style="left:2519.9px;top:777.5px;letter-spacing:0.30px;">(45)</div>
<div class="t t12" style="left:2657.9px;top:777.5px;letter-spacing:0.30px;">(45)</div>
<div class="t t12" style="left:2795.9px;top:777.5px;letter-spacing:0.30px;">(45)</div>
<div class="t t13" style="left:95.4px;top:800.5px;transform:scaleX(1.0310);transform-origin:0 50%;">% of Revenue</div>
<div class="t t13" style="left:610.6px;top:800.5px;letter-spacing:0.90px;">(11%)</div>
<div class="t t13" style="left:741.3px;top:800.5px;letter-spacing:0.90px;">(8%)</div>
<div class="t t13" style="left:861.3px;top:800.5px;letter-spacing:0.90px;">(6%)</div>
<div class="t t13" style="left:981.3px;top:800.5px;letter-spacing:0.90px;">(5%)</div>
<div class="t t13" style="left:1101.5px;top:800.5px;letter-spacing:0.90px;">(4%)</div>
<div class="t t13" style="left:1259.5px;top:800.5px;letter-spacing:0.90px;">(11%)</div>
<div class="t t13" style="left:1397.5px;top:800.5px;letter-spacing:0.90px;">(11%)</div>
<div class="t t13" style="left:1535.5px;top:800.5px;letter-spacing:0.90px;">(11%)</div>
<div class="t t13" style="left:1673.5px;top:800.5px;letter-spacing:0.90px;">(11%)</div>
<div class="t t13" style="left:1811.5px;top:800.5px;letter-spacing:0.90px;">(11%)</div>
<div class="t t13" style="left:1949.5px;top:800.5px;letter-spacing:0.90px;">(11%)</div>
<div class="t t13" style="left:2087.5px;top:800.5px;letter-spacing:0.90px;">(11%)</div>
<div class="t t13" style="left:2225.5px;top:800.5px;letter-spacing:0.90px;">(11%)</div>
<div class="t t13" style="left:2363.5px;top:800.5px;letter-spacing:0.90px;">(11%)</div>
<div class="t t13" style="left:2501.5px;top:800.5px;letter-spacing:0.90px;">(11%)</div>
<div class="t t13" style="left:2639.5px;top:800.5px;letter-spacing:0.90px;">(11%)</div>
<div class="t t13" style="left:2777.5px;top:800.5px;letter-spacing:0.90px;">(11%)</div>
<div class="b" style="left:71.4px;top:827.0px;width:1074.3px;height:26.7px;background:#4ab2e7;"></div>
<div class="b" style="left:1176.3px;top:827.0px;width:1656.5px;height:26.7px;background:#4ab2e7;"></div>
<div class="t t14" style="left:86.6px;top:827.9px;transform:scaleX(1.0703);transform-origin:0 50%;">EBITDA</div>
<div class="t t11" style="left:604.3px;top:829.2px;">2,471</div>
<div class="t t11" style="left:724.2px;top:829.2px;">4,113</div>
<div class="t t11" style="left:844.2px;top:829.2px;">6,035</div>
<div class="t t11" style="left:964.2px;top:829.2px;">7,998</div>
<div class="t t11" style="left:1084.4px;top:829.2px;">9,835</div>
<div class="t t11" style="left:1269.9px;top:829.2px;">206</div>
<div class="t t11" style="left:1407.9px;top:829.2px;">206</div>
<div class="t t11" style="left:1545.9px;top:829.2px;">206</div>
<div class="t t11" style="left:1683.9px;top:829.2px;">206</div>
<div class="t t11" style="left:1821.9px;top:829.2px;">206</div>
<div class="t t11" style="left:1959.9px;top:829.2px;">206</div>
<div class="t t11" style="left:2097.9px;top:829.2px;">206</div>
<div class="t t11" style="left:2235.9px;top:829.2px;">206</div>
<div class="t t11" style="left:2373.9px;top:829.2px;">206</div>
<div class="t t11" style="left:2511.9px;top:829.2px;">206</div>
<div class="t t11" style="left:2649.9px;top:829.2px;">206</div>
<div class="t t11" style="left:2787.9px;top:829.2px;">206</div>
<div class="t t13" style="left:75.8px;top:854.5px;transform:scaleX(1.1218);transform-origin:0 50%;">EBITDA %</div>
<div class="t t13" style="left:616.5px;top:854.5px;letter-spacing:0.90px;">51%</div>
<div class="t t13" style="left:736.4px;top:854.5px;letter-spacing:0.90px;">58%</div>
<div class="t t13" style="left:856.4px;top:854.5px;letter-spacing:0.90px;">64%</div>
<div class="t t13" style="left:976.4px;top:854.5px;letter-spacing:0.90px;">67%</div>
<div class="t t13" style="left:1096.6px;top:854.5px;letter-spacing:0.90px;">69%</div>
<div class="t t13" style="left:1265.4px;top:854.5px;letter-spacing:0.90px;">51%</div>
<div class="t t13" style="left:1403.4px;top:854.5px;letter-spacing:0.90px;">51%</div>
<div class="t t13" style="left:1541.4px;top:854.5px;letter-spacing:0.90px;">51%</div>
<div class="t t13" style="left:1679.4px;top:854.5px;letter-spacing:0.90px;">51%</div>
<div class="t t13" style="left:1817.4px;top:854.5px;letter-spacing:0.90px;">51%</div>
<div class="t t13" style="left:1955.4px;top:854.5px;letter-spacing:0.90px;">51%</div>
<div class="t t13" style="left:2093.4px;top:854.5px;letter-spacing:0.90px;">51%</div>
<div class="t t13" style="left:2231.4px;top:854.5px;letter-spacing:0.90px;">51%</div>
<div class="t t13" style="left:2369.4px;top:854.5px;letter-spacing:0.90px;">51%</div>
<div class="t t13" style="left:2507.4px;top:854.5px;letter-spacing:0.90px;">51%</div>
<div class="t t13" style="left:2645.4px;top:854.5px;letter-spacing:0.90px;">51%</div>
<div class="t t13" style="left:2783.4px;top:854.5px;letter-spacing:0.90px;">51%</div>
<div class="t t12" style="left:75.4px;top:877.5px;transform:scaleX(0.9931);transform-origin:0 50%;">Depreciation &amp; Amortization</div>
<div class="t t12" style="left:618.9px;top:877.5px;letter-spacing:0.30px;">(444)</div>
<div class="t t12" style="left:738.8px;top:877.5px;letter-spacing:0.30px;">(690)</div>
<div class="t t12" style="left:858.8px;top:877.5px;letter-spacing:0.30px;">(690)</div>
<div class="t t12" style="left:978.8px;top:877.5px;letter-spacing:0.30px;">(690)</div>
<div class="t t12" style="left:1099.0px;top:877.5px;letter-spacing:0.30px;">(690)</div>
<div class="t t12" style="left:1288.1px;top:877.5px;letter-spacing:0.30px;">(4)</div>
<div class="t t12" style="left:1426.1px;top:877.5px;letter-spacing:0.30px;">(8)</div>
<div class="t t12" style="left:1553.9px;top:877.5px;letter-spacing:0.30px;">(15)</div>
<div class="t t12" style="left:1691.9px;top:877.5px;letter-spacing:0.30px;">(23)</div>
<div class="t t12" style="left:1829.9px;top:877.5px;letter-spacing:0.30px;">(31)</div>
<div class="t t12" style="left:1967.9px;top:877.5px;letter-spacing:0.30px;">(40)</div>
<div class="t t12" style="left:2105.9px;top:877.5px;letter-spacing:0.30px;">(46)</div>
<div class="t t12" style="left:2243.9px;top:877.5px;letter-spacing:0.30px;">(52)</div>
<div class="t t12" style="left:2381.9px;top:877.5px;letter-spacing:0.30px;">(55)</div>
<div class="t t12" style="left:2519.9px;top:877.5px;letter-spacing:0.30px;">(56)</div>
<div class="t t12" style="left:2657.9px;top:877.5px;letter-spacing:0.30px;">(57)</div>
<div class="t t12" style="left:2795.9px;top:877.5px;letter-spacing:0.30px;">(58)</div>
<div class="t t12" style="left:75.4px;top:900.5px;transform:scaleX(1.0928);transform-origin:0 50%;">EBIT</div>
<div class="t t12" style="left:610.4px;top:900.5px;letter-spacing:-0.18px;">2,027</div>
<div class="t t12" style="left:730.3px;top:900.5px;letter-spacing:-0.18px;">3,423</div>
<div class="t t12" style="left:850.3px;top:900.5px;letter-spacing:-0.18px;">5,345</div>
<div class="t t12" style="left:970.3px;top:900.5px;letter-spacing:-0.18px;">7,308</div>
<div class="t t12" style="left:1090.5px;top:900.5px;letter-spacing:-0.18px;">9,145</div>
<div class="t t12" style="left:1273.7px;top:900.5px;letter-spacing:-0.18px;">202</div>
<div class="t t12" style="left:1411.7px;top:900.5px;letter-spacing:-0.18px;">198</div>
<div class="t t12" style="left:1549.7px;top:900.5px;letter-spacing:-0.18px;">191</div>
<div class="t t12" style="left:1687.7px;top:900.5px;letter-spacing:-0.18px;">183</div>
<div class="t t12" style="left:1825.7px;top:900.5px;letter-spacing:-0.18px;">175</div>
<div class="t t12" style="left:1963.7px;top:900.5px;letter-spacing:-0.18px;">166</div>
<div class="t t12" style="left:2101.7px;top:900.5px;letter-spacing:-0.18px;">160</div>
<div class="t t12" style="left:2239.7px;top:900.5px;letter-spacing:-0.18px;">154</div>
<div class="t t12" style="left:2377.7px;top:900.5px;letter-spacing:-0.18px;">151</div>
<div class="t t12" style="left:2515.7px;top:900.5px;letter-spacing:-0.18px;">150</div>
<div class="t t12" style="left:2653.7px;top:900.5px;letter-spacing:-0.18px;">149</div>
<div class="t t12" style="left:2791.7px;top:900.5px;letter-spacing:-0.18px;">148</div>
<div class="t t12" style="left:75.4px;top:923.5px;transform:scaleX(1.0102);transform-origin:0 50%;">Net Interest Expense</div>
<div class="t t12" style="left:629.0px;top:923.5px;letter-spacing:0.30px;">(42)</div>
<div class="t t12" style="left:748.9px;top:923.5px;letter-spacing:0.30px;">(40)</div>
<div class="t t12" style="left:868.9px;top:923.5px;letter-spacing:0.30px;">(33)</div>
<div class="t t12" style="left:988.9px;top:923.5px;letter-spacing:0.30px;">(25)</div>
<div class="t t12" style="left:1109.1px;top:923.5px;letter-spacing:0.30px;">(18)</div>
<div class="t t12" style="left:1288.1px;top:923.5px;letter-spacing:0.30px;">(3)</div>
<div class="t t12" style="left:1426.1px;top:923.5px;letter-spacing:0.30px;">(3)</div>
<div class="t t12" style="left:1564.1px;top:923.5px;letter-spacing:0.30px;">(4)</div>
<div class="t t12" style="left:1702.1px;top:923.5px;letter-spacing:0.30px;">(4)</div>
<div class="t t12" style="left:1840.1px;top:923.5px;letter-spacing:0.30px;">(4)</div>
<div class="t t12" style="left:1978.1px;top:923.5px;letter-spacing:0.30px;">(4)</div>
<div class="t t12" style="left:2116.1px;top:923.5px;letter-spacing:0.30px;">(4)</div>
<div class="t t12" style="left:2254.1px;top:923.5px;letter-spacing:0.30px;">(4)</div>
<div class="t t12" style="left:2392.1px;top:923.5px;letter-spacing:0.30px;">(4)</div>
<div class="t t12" style="left:2530.1px;top:923.5px;letter-spacing:0.30px;">(4)</div>
<div class="t t12" style="left:2668.1px;top:923.5px;letter-spacing:0.30px;">(4)</div>
<div class="t t12" style="left:2806.1px;top:923.5px;letter-spacing:0.30px;">(4)</div>
<div class="t t12" style="left:75.4px;top:946.5px;transform:scaleX(1.0471);transform-origin:0 50%;">Net Profit Before Tax</div>
<div class="t t12" style="left:610.4px;top:946.5px;letter-spacing:-0.18px;">1,985</div>
<div class="t t12" style="left:730.3px;top:946.5px;letter-spacing:-0.18px;">3,383</div>
<div class="t t12" style="left:850.3px;top:946.5px;letter-spacing:-0.18px;">5,312</div>
<div class="t t12" style="left:970.3px;top:946.5px;letter-spacing:-0.18px;">7,282</div>
<div class="t t12" style="left:1090.5px;top:946.5px;letter-spacing:-0.18px;">9,128</div>
<div class="t t12" style="left:1273.7px;top:946.5px;letter-spacing:-0.18px;">200</div>
<div class="t t12" style="left:1411.7px;top:946.5px;letter-spacing:-0.18px;">195</div>
<div class="t t12" style="left:1549.7px;top:946.5px;letter-spacing:-0.18px;">187</div>
<div class="t t12" style="left:1687.7px;top:946.5px;letter-spacing:-0.18px;">179</div>
<div class="t t12" style="left:1825.7px;top:946.5px;letter-spacing:-0.18px;">171</div>
<div class="t t12" style="left:1963.7px;top:946.5px;letter-spacing:-0.18px;">162</div>
<div class="t t12" style="left:2101.7px;top:946.5px;letter-spacing:-0.18px;">156</div>
<div class="t t12" style="left:2239.7px;top:946.5px;letter-spacing:-0.18px;">151</div>
<div class="t t12" style="left:2377.7px;top:946.5px;letter-spacing:-0.18px;">147</div>
<div class="t t12" style="left:2515.7px;top:946.5px;letter-spacing:-0.18px;">146</div>
<div class="t t12" style="left:2653.7px;top:946.5px;letter-spacing:-0.18px;">145</div>
<div class="t t12" style="left:2791.7px;top:946.5px;letter-spacing:-0.18px;">145</div>
<div class="t t12" style="left:75.4px;top:969.2px;transform:scaleX(1.0353);transform-origin:0 50%;">Tax Expense</div>
<div class="t t12" style="left:618.9px;top:969.2px;letter-spacing:0.30px;">(496)</div>
<div class="t t12" style="left:738.8px;top:969.2px;letter-spacing:0.30px;">(846)</div>
<div class="t t12" style="left:843.4px;top:969.2px;letter-spacing:0.30px;">(1,328)</div>
<div class="t t12" style="left:963.4px;top:969.2px;letter-spacing:0.30px;">(1,821)</div>
<div class="t t12" style="left:1083.6px;top:969.2px;letter-spacing:0.30px;">(2,282)</div>
<div class="t t12" style="left:1277.9px;top:969.2px;letter-spacing:0.30px;">(50)</div>
<div class="t t12" style="left:1415.9px;top:969.2px;letter-spacing:0.30px;">(49)</div>
<div class="t t12" style="left:1553.9px;top:969.2px;letter-spacing:0.30px;">(47)</div>
<div class="t t12" style="left:1691.9px;top:969.2px;letter-spacing:0.30px;">(45)</div>
<div class="t t12" style="left:1829.9px;top:969.2px;letter-spacing:0.30px;">(43)</div>
<div class="t t12" style="left:1967.9px;top:969.2px;letter-spacing:0.30px;">(41)</div>
<div class="t t12" style="left:2105.9px;top:969.2px;letter-spacing:0.30px;">(39)</div>
<div class="t t12" style="left:2243.9px;top:969.2px;letter-spacing:0.30px;">(38)</div>
<div class="t t12" style="left:2381.9px;top:969.2px;letter-spacing:0.30px;">(37)</div>
<div class="t t12" style="left:2519.9px;top:969.2px;letter-spacing:0.30px;">(37)</div>
<div class="t t12" style="left:2657.9px;top:969.2px;letter-spacing:0.30px;">(36)</div>
<div class="t t12" style="left:2795.9px;top:969.2px;letter-spacing:0.30px;">(36)</div>
<div class="b" style="left:71.4px;top:991.2px;width:1074.3px;height:26.8px;background:#4ab2e7;"></div>
<div class="b" style="left:1176.3px;top:991.2px;width:1656.5px;height:26.8px;background:#4ab2e7;"></div>
<div class="t t14" style="left:86.6px;top:992.2px;transform:scaleX(1.0365);transform-origin:0 50%;">Net Profit After Tax</div>
<div class="t t11" style="left:604.3px;top:993.5px;">1,489</div>
<div class="t t11" style="left:724.2px;top:993.5px;">2,537</div>
<div class="t t11" style="left:844.2px;top:993.5px;">3,984</div>
<div class="t t11" style="left:964.2px;top:993.5px;">5,462</div>
<div class="t t11" style="left:1084.4px;top:993.5px;">6,846</div>
<div class="t t11" style="left:1269.9px;top:993.5px;">150</div>
<div class="t t11" style="left:1407.9px;top:993.5px;">147</div>
<div class="t t11" style="left:1545.9px;top:993.5px;">141</div>
<div class="t t11" style="left:1683.9px;top:993.5px;">135</div>
<div class="t t11" style="left:1821.9px;top:993.5px;">128</div>
<div class="t t11" style="left:1959.9px;top:993.5px;">122</div>
<div class="t t11" style="left:2097.9px;top:993.5px;">117</div>
<div class="t t11" style="left:2235.9px;top:993.5px;">113</div>
<div class="t t11" style="left:2373.9px;top:993.5px;">111</div>
<div class="t t11" style="left:2511.9px;top:993.5px;">110</div>
<div class="t t11" style="left:2649.9px;top:993.5px;">109</div>
<div class="t t11" style="left:2787.9px;top:993.5px;">109</div>
<div class="t t13" style="left:93.8px;top:1019.0px;transform:scaleX(1.0587);transform-origin:0 50%;">Net Profit After Tax %</div>
<div class="t t13" style="left:616.5px;top:1019.0px;letter-spacing:0.90px;">31%</div>
<div class="t t13" style="left:736.4px;top:1019.0px;letter-spacing:0.90px;">36%</div>
<div class="t t13" style="left:856.4px;top:1019.0px;letter-spacing:0.90px;">42%</div>
<div class="t t13" style="left:976.4px;top:1019.0px;letter-spacing:0.90px;">46%</div>
<div class="t t13" style="left:1096.6px;top:1019.0px;letter-spacing:0.90px;">48%</div>
<div class="t t13" style="left:1265.4px;top:1019.0px;letter-spacing:0.90px;">37%</div>
<div class="t t13" style="left:1403.4px;top:1019.0px;letter-spacing:0.90px;">36%</div>
<div class="t t13" style="left:1541.4px;top:1019.0px;letter-spacing:0.90px;">35%</div>
<div class="t t13" style="left:1679.4px;top:1019.0px;letter-spacing:0.90px;">33%</div>
<div class="t t13" style="left:1817.4px;top:1019.0px;letter-spacing:0.90px;">32%</div>
<div class="t t13" style="left:1955.4px;top:1019.0px;letter-spacing:0.90px;">30%</div>
<div class="t t13" style="left:2093.4px;top:1019.0px;letter-spacing:0.90px;">29%</div>
<div class="t t13" style="left:2231.4px;top:1019.0px;letter-spacing:0.90px;">28%</div>
<div class="t t13" style="left:2369.4px;top:1019.0px;letter-spacing:0.90px;">27%</div>
<div class="t t13" style="left:2507.4px;top:1019.0px;letter-spacing:0.90px;">27%</div>
<div class="t t13" style="left:2645.4px;top:1019.0px;letter-spacing:0.90px;">27%</div>
<div class="t t13" style="left:2783.4px;top:1019.0px;letter-spacing:0.90px;">27%</div>
<div class="b" style="left:71.4px;top:1064.0px;width:1074.3px;height:36.2px;background:#4b50d2;"></div>
<div class="t t10" style="left:238.8px;top:1064.6px;transform:scaleX(1.0525);transform-origin:50% 50%;">Income Statement ($&#x27;000) - 5 years to December 2030</div>
<div class="b" style="left:1176.3px;top:1064.0px;width:1656.5px;height:36.2px;background:#4b50d2;"></div>
<div class="t t10" style="left:1780.1px;top:1064.6px;transform:scaleX(1.0654);transform-origin:50% 50%;">Income Statement ($&#x27;000) - 2026</div>
<div class="b" style="left:71.4px;top:1560.4px;width:1074.3px;height:35.3px;background:#4b50d2;"></div>
<div class="t t10" style="left:266.8px;top:1560.1px;transform:scaleX(1.0426);transform-origin:50% 50%;">Balance Sheet ($&#x27;000) - 5 years to December 2030</div>
<div class="b" style="left:1176.3px;top:1560.4px;width:1656.5px;height:35.3px;background:#4b50d2;"></div>
<div class="t t10" style="left:1808.1px;top:1560.1px;transform:scaleX(1.0509);transform-origin:50% 50%;">Balance Sheet ($&#x27;000) - 2026</div>
<div class="b" style="left:72.2px;top:1601.1px;width:472.5px;height:22.0px;background:#7078eb;"></div>
<div class="t t11" style="left:83.6px;top:1602.5px;transform:scaleX(1.0341);transform-origin:0 50%;">Year Ending</div>
<div class="b" style="left:545.8px;top:1601.1px;width:119.0px;height:22.0px;background:#7078eb;"></div>
<div class="t t11" style="left:583.7px;top:1602.5px;">2026</div>
<div class="b" style="left:665.9px;top:1601.1px;width:118.8px;height:22.0px;background:#7078eb;"></div>
<div class="t t11" style="left:703.7px;top:1602.5px;">2027</div>
<div class="b" style="left:785.8px;top:1601.1px;width:118.9px;height:22.0px;background:#7078eb;"></div>
<div class="t t11" style="left:823.7px;top:1602.5px;">2028</div>
<div class="b" style="left:905.8px;top:1601.1px;width:118.9px;height:22.0px;background:#7078eb;"></div>
<div class="t t11" style="left:943.7px;top:1602.5px;">2029</div>
<div class="b" style="left:1025.8px;top:1601.1px;width:119.1px;height:22.0px;background:#7078eb;"></div>
<div class="t t11" style="left:1063.8px;top:1602.5px;">2030</div>
<div class="b" style="left:1176.9px;top:1601.1px;width:136.8px;height:22.0px;background:#7078eb;"></div>
<div class="t t11" style="left:1231.7px;top:1602.5px;">Jan</div>
<div class="b" style="left:1314.9px;top:1601.1px;width:136.8px;height:22.0px;background:#7078eb;"></div>
<div class="t t11" style="left:1367.5px;top:1602.5px;">Feb</div>
<div class="b" style="left:1452.9px;top:1601.1px;width:136.8px;height:22.0px;background:#7078eb;"></div>
<div class="t t11" style="left:1504.5px;top:1602.5px;">Mar</div>
<div class="b" style="left:1590.9px;top:1601.1px;width:136.8px;height:22.0px;background:#7078eb;"></div>
<div class="t t11" style="left:1643.9px;top:1602.5px;">Apr</div>
<div class="b" style="left:1728.9px;top:1601.1px;width:136.8px;height:22.0px;background:#7078eb;"></div>
<div class="t t11" style="left:1779.5px;top:1602.5px;">May</div>
<div class="b" style="left:1866.9px;top:1601.1px;width:136.8px;height:22.0px;background:#7078eb;"></div>
<div class="t t11" style="left:1921.4px;top:1602.5px;">Jun</div>
<div class="b" style="left:2004.9px;top:1601.1px;width:136.8px;height:22.0px;background:#7078eb;"></div>
<div class="t t11" style="left:2062.2px;top:1602.5px;">Jul</div>
<div class="b" style="left:2142.9px;top:1601.1px;width:136.8px;height:22.0px;background:#7078eb;"></div>
<div class="t t11" style="left:2194.2px;top:1602.5px;">Aug</div>
<div class="b" style="left:2280.9px;top:1601.1px;width:136.8px;height:22.0px;background:#7078eb;"></div>
<div class="t t11" style="left:2332.9px;top:1602.5px;">Sep</div>
<div class="b" style="left:2418.9px;top:1601.1px;width:136.8px;height:22.0px;background:#7078eb;"></div>
<div class="t t11" style="left:2472.4px;top:1602.5px;">Oct</div>
<div class="b" style="left:2556.9px;top:1601.1px;width:136.8px;height:22.0px;background:#7078eb;"></div>
<div class="t t11" style="left:2608.4px;top:1602.5px;">Nov</div>
<div class="b" style="left:2694.9px;top:1601.1px;width:136.8px;height:22.0px;background:#7078eb;"></div>
<div class="t t11" style="left:2747.0px;top:1602.5px;">Dec</div>
<div class="t t12" style="left:75.4px;top:1630.0px;transform:scaleX(0.9951);transform-origin:0 50%;">Current Assets</div>
<div class="t t12" style="left:603.5px;top:1630.0px;letter-spacing:0.30px;">(3,505)</div>
<div class="t t12" style="left:738.8px;top:1630.0px;letter-spacing:0.30px;">(359)</div>
<div class="t t12" style="left:850.3px;top:1630.0px;letter-spacing:-0.18px;">4,223</div>
<div class="t t12" style="left:960.6px;top:1630.0px;letter-spacing:-0.18px;">10,281</div>
<div class="t t12" style="left:1080.8px;top:1630.0px;letter-spacing:-0.18px;">17,720</div>
<div class="t t12" style="left:1273.7px;top:1630.0px;letter-spacing:-0.18px;">983</div>
<div class="t t12" style="left:1411.7px;top:1630.0px;letter-spacing:-0.18px;">648</div>
<div class="t t12" style="left:1549.7px;top:1630.0px;letter-spacing:-0.18px;">189</div>
<div class="t t12" style="left:1681.8px;top:1630.0px;letter-spacing:0.30px;">(603)</div>
<div class="t t12" style="left:1804.4px;top:1630.0px;letter-spacing:0.30px;">(1,459)</div>
<div class="t t12" style="left:1942.4px;top:1630.0px;letter-spacing:0.30px;">(2,381)</div>
<div class="t t12" style="left:2080.4px;top:1630.0px;letter-spacing:0.30px;">(2,933)</div>
<div class="t t12" style="left:2218.4px;top:1630.0px;letter-spacing:0.30px;">(3,446)</div>
<div class="t t12" style="left:2356.4px;top:1630.0px;letter-spacing:0.30px;">(3,656)</div>
<div class="t t12" style="left:2494.4px;top:1630.0px;letter-spacing:0.30px;">(3,672)</div>
<div class="t t12" style="left:2632.4px;top:1630.0px;letter-spacing:0.30px;">(3,623)</div>
<div class="t t12" style="left:2770.4px;top:1630.0px;letter-spacing:0.30px;">(3,505)</div>
<div class="t t12" style="left:75.4px;top:1653.0px;transform:scaleX(1.0140);transform-origin:0 50%;">Non-Current Assets</div>
<div class="t t12" style="left:610.4px;top:1653.0px;letter-spacing:-0.18px;">6,456</div>
<div class="t t12" style="left:730.3px;top:1653.0px;letter-spacing:-0.18px;">5,766</div>
<div class="t t12" style="left:850.3px;top:1653.0px;letter-spacing:-0.18px;">5,076</div>
<div class="t t12" style="left:970.3px;top:1653.0px;letter-spacing:-0.18px;">4,386</div>
<div class="t t12" style="left:1090.5px;top:1653.0px;letter-spacing:-0.18px;">3,696</div>
<div class="t t12" style="left:1273.7px;top:1653.0px;letter-spacing:-0.18px;">463</div>
<div class="t t12" style="left:1411.7px;top:1653.0px;letter-spacing:-0.18px;">955</div>
<div class="t t12" style="left:1535.3px;top:1653.0px;letter-spacing:-0.18px;">1,740</div>
<div class="t t12" style="left:1673.3px;top:1653.0px;letter-spacing:-0.18px;">2,667</div>
<div class="t t12" style="left:1811.3px;top:1653.0px;letter-spacing:-0.18px;">3,645</div>
<div class="t t12" style="left:1949.3px;top:1653.0px;letter-spacing:-0.18px;">4,688</div>
<div class="t t12" style="left:2087.3px;top:1653.0px;letter-spacing:-0.18px;">5,350</div>
<div class="t t12" style="left:2225.3px;top:1653.0px;letter-spacing:-0.18px;">5,974</div>
<div class="t t12" style="left:2363.3px;top:1653.0px;letter-spacing:-0.18px;">6,294</div>
<div class="t t12" style="left:2501.3px;top:1653.0px;letter-spacing:-0.18px;">6,413</div>
<div class="t t12" style="left:2639.3px;top:1653.0px;letter-spacing:-0.18px;">6,472</div>
<div class="t t12" style="left:2777.3px;top:1653.0px;letter-spacing:-0.18px;">6,456</div>
<div class="t t15" style="left:146.3px;top:1510.4px;transform:scaleX(1.0300);transform-origin:50% 50%;">2026</div>
<div class="t t15" style="left:340.9px;top:1510.4px;transform:scaleX(1.0300);transform-origin:50% 50%;">2027</div>
<div class="t t15" style="left:535.5px;top:1510.4px;transform:scaleX(1.0300);transform-origin:50% 50%;">2028</div>
<div class="t t15" style="left:730.1px;top:1510.4px;transform:scaleX(1.0300);transform-origin:50% 50%;">2029</div>
<div class="t t15" style="left:924.7px;top:1510.4px;transform:scaleX(1.0300);transform-origin:50% 50%;">2030</div>
<div class="t t15" style="left:1067.2px;top:1148.4px;transform:scaleX(1.0300);transform-origin:0 50%;">16,000</div>
<div class="t t15" style="left:1067.2px;top:1190.5px;transform:scaleX(1.0300);transform-origin:0 50%;">14,000</div>
<div class="t t15" style="left:1067.2px;top:1232.5px;transform:scaleX(1.0300);transform-origin:0 50%;">12,000</div>
<div class="t t15" style="left:1067.2px;top:1274.6px;transform:scaleX(1.0300);transform-origin:0 50%;">10,000</div>
<div class="t t15" style="left:1067.2px;top:1316.7px;transform:scaleX(1.0300);transform-origin:0 50%;">8,000</div>
<div class="t t15" style="left:1067.2px;top:1358.8px;transform:scaleX(1.0300);transform-origin:0 50%;">6,000</div>
<div class="t t15" style="left:1067.2px;top:1400.9px;transform:scaleX(1.0300);transform-origin:0 50%;">4,000</div>
<div class="t t15" style="left:1067.2px;top:1443.0px;transform:scaleX(1.0300);transform-origin:0 50%;">2,000</div>
<div class="t t15" style="left:1067.2px;top:1485.1px;transform:scaleX(1.0300);transform-origin:0 50%;">-</div>
<div class="t t15" style="left:379.3px;top:1119.0px;transform:scaleX(0.9992);transform-origin:0 50%;">Revenue</div>
<div class="t t15" style="left:546.0px;top:1119.0px;transform:scaleX(1.0441);transform-origin:0 50%;">EBITDA</div>
<div class="t t15" style="left:708.8px;top:1119.0px;transform:scaleX(1.0135);transform-origin:0 50%;">Net Profit After Tax</div>
<div class="t t15" style="left:1228.4px;top:1510.4px;transform:scaleX(1.0300);transform-origin:50% 50%;">Jan</div>
<div class="t t15" style="left:1358.5px;top:1510.4px;transform:scaleX(1.0300);transform-origin:50% 50%;">Feb</div>
<div class="t t15" style="left:1489.9px;top:1510.4px;transform:scaleX(1.0300);transform-origin:50% 50%;">Mar</div>
<div class="t t15" style="left:1623.7px;top:1510.4px;transform:scaleX(1.0300);transform-origin:50% 50%;">Apr</div>
<div class="t t15" style="left:1753.7px;top:1510.4px;transform:scaleX(1.0300);transform-origin:50% 50%;">May</div>
<div class="t t15" style="left:1890.1px;top:1510.4px;transform:scaleX(1.0300);transform-origin:50% 50%;">Jun</div>
<div class="t t15" style="left:2025.4px;top:1510.4px;transform:scaleX(1.0300);transform-origin:50% 50%;">Jul</div>
<div class="t t15" style="left:2151.6px;top:1510.4px;transform:scaleX(1.0300);transform-origin:50% 50%;">Aug</div>
<div class="t t15" style="left:2284.7px;top:1510.4px;transform:scaleX(1.0300);transform-origin:50% 50%;">Sep</div>
<div class="t t15" style="left:2418.6px;top:1510.4px;transform:scaleX(1.0300);transform-origin:50% 50%;">Oct</div>
<div class="t t15" style="left:2549.0px;top:1510.4px;transform:scaleX(1.0300);transform-origin:50% 50%;">Nov</div>
<div class="t t15" style="left:2682.0px;top:1510.4px;transform:scaleX(1.0300);transform-origin:50% 50%;">Dec</div>
<div class="t t15" style="left:2787.2px;top:1148.2px;transform:scaleX(1.0300);transform-origin:0 50%;">450</div>
<div class="t t15" style="left:2787.2px;top:1185.6px;transform:scaleX(1.0300);transform-origin:0 50%;">400</div>
<div class="t t15" style="left:2787.2px;top:1223.1px;transform:scaleX(1.0300);transform-origin:0 50%;">350</div>
<div class="t t15" style="left:2787.2px;top:1260.6px;transform:scaleX(1.0300);transform-origin:0 50%;">300</div>
<div class="t t15" style="left:2787.2px;top:1298.0px;transform:scaleX(1.0300);transform-origin:0 50%;">250</div>
<div class="t t15" style="left:2787.2px;top:1335.5px;transform:scaleX(1.0300);transform-origin:0 50%;">200</div>
<div class="t t15" style="left:2787.2px;top:1373.0px;transform:scaleX(1.0300);transform-origin:0 50%;">150</div>
<div class="t t15" style="left:2787.2px;top:1410.4px;transform:scaleX(1.0300);transform-origin:0 50%;">100</div>
<div class="t t15" style="left:2787.2px;top:1447.9px;transform:scaleX(1.0300);transform-origin:0 50%;">50</div>
<div class="t t15" style="left:2787.2px;top:1485.4px;transform:scaleX(1.0300);transform-origin:0 50%;">-</div>
<div class="t t15" style="left:1775.0px;top:1119.0px;transform:scaleX(1.0068);transform-origin:0 50%;">Revenue</div>
<div class="t t15" style="left:1941.4px;top:1119.0px;transform:scaleX(1.0591);transform-origin:0 50%;">EBITDA</div>
<div class="t t15" style="left:2104.3px;top:1119.0px;transform:scaleX(1.0175);transform-origin:0 50%;">Net Profit After Tax</div>
<div class="b" style="left:23.0px;top:128.0px;width:2855.7px;height:149.8px;background:#292929;border-radius:10px"></div>
<div class="b" style="left:282.0px;top:135.3px;width:1.2px;height:133.0px;background:#4b4b4b;"></div>
<div class="b" style="left:633.1px;top:135.3px;width:1.2px;height:133.0px;background:#4b4b4b;"></div>
<div class="b" style="left:1083.1px;top:135.3px;width:1.2px;height:133.0px;background:#4b4b4b;"></div>
<div class="b" style="left:1325.0px;top:135.3px;width:1.2px;height:133.0px;background:#4b4b4b;"></div>
<div class="b" style="left:1544.1px;top:135.3px;width:1.2px;height:133.0px;background:#4b4b4b;"></div>
<div class="b" style="left:1868.0px;top:135.3px;width:1.2px;height:133.0px;background:#4b4b4b;"></div>
<div class="b" style="left:1962.8px;top:135.3px;width:1.2px;height:133.0px;background:#4b4b4b;"></div>
<div class="b" style="left:2056.0px;top:135.3px;width:1.2px;height:133.0px;background:#4b4b4b;"></div>
<div class="t t16" style="left:52.0px;top:192.7px;transform:scaleX(0.8505);transform-origin:0 50%;">Paste</div>
<div class="t t17" style="left:142.3px;top:141.5px;transform:scaleX(0.9540);transform-origin:0 50%;">Cut</div>
<div class="t t17" style="left:142.3px;top:180.4px;transform:scaleX(0.9852);transform-origin:0 50%;">Copy</div>
<div class="t t17" style="left:142.3px;top:219.6px;transform:scaleX(0.9788);transform-origin:0 50%;">Format Painter</div>
<div class="t t18" style="left:109.0px;top:252.2px;letter-spacing:0.08px;">Clipboard</div>
<div class="b" style="left:295.3px;top:146.4px;width:180.2px;height:35.3px;background:transparent;border:1px solid #606060;border-radius:6px"></div>
<div class="t t17" style="left:298.6px;top:154.0px;transform:scaleX(0.9911);transform-origin:0 50%;">Tahoma</div>
<div class="b" style="left:479.0px;top:146.4px;width:64.8px;height:35.3px;background:transparent;border:1px solid #606060;border-radius:6px"></div>
<div class="t t17" style="left:482.2px;top:154.0px;">8</div>
<div class="t t19" style="left:554.6px;top:144.6px;transform:scaleX(0.9486);transform-origin:0 50%;">A</div>
<div class="t t20" style="left:596.3px;top:150.6px;transform:scaleX(0.9551);transform-origin:0 50%;">A</div>
<div class="t t21" style="left:307.4px;top:197.6px;transform:scaleX(0.7966);transform-origin:0 50%;">B</div>
<div class="t t22" style="left:348.5px;top:197.6px;">I</div>
<div class="t t23" style="left:384.2px;top:198.1px;transform:scaleX(0.8798);transform-origin:0 50%;">U</div>
<div class="b" style="left:383.6px;top:219.4px;width:13.6px;height:1.6px;background:#d9d9d9;"></div>
<div class="b" style="left:433.7px;top:194.1px;width:1.2px;height:35.9px;background:#4b4b4b;"></div>
<div class="b" style="left:498.9px;top:194.1px;width:1.2px;height:35.9px;background:#4b4b4b;"></div>
<div class="b" style="left:509.2px;top:218.0px;width:23.9px;height:5.6px;background:#ffef00;"></div>
<div class="t t24" style="left:572.6px;top:193.1px;">A</div>
<div class="b" style="left:569.8px;top:218.0px;width:24.3px;height:5.6px;background:#ee1111;"></div>
<div class="t t18" style="left:430.3px;top:252.2px;transform:scaleX(0.9712);transform-origin:0 50%;">Font</div>
<div class="b" style="left:685.3px;top:146.3px;width:35.4px;height:35.5px;background:#3e3e3e;border:1px solid #7d7d7d;border-radius:6px"></div>
<div class="b" style="left:763.0px;top:146.3px;width:1.2px;height:35.1px;background:#4b4b4b;"></div>
<div style="position:absolute;left:769px;top:148.500px;font:14.500px/16px 'Liberation Sans',sans-serif;color:#d6d6d6;transform:rotate(-45deg);transform-origin:50% 50%;letter-spacing:-0.5px">ab</div>
<div class="b" style="left:850.8px;top:144.4px;width:1.2px;height:93.5px;background:#4b4b4b;"></div>
<div class="t t25" style="left:871.0px;top:150.1px;letter-spacing:1.86px;">ab</div>
<div class="t t25" style="left:871.5px;top:161.0px;">c</div>
<div class="t t17" style="left:897.6px;top:154.0px;transform:scaleX(0.9749);transform-origin:0 50%;">Wrap Text</div>
<div class="b" style="left:763.0px;top:194.0px;width:1.2px;height:36.0px;background:#4b4b4b;"></div>
<div class="t t17" style="left:897.6px;top:201.9px;letter-spacing:-0.02px;">Merge &amp; Center</div>
<div class="t t18" style="left:810.5px;top:252.9px;letter-spacing:0.16px;">Alignment</div>
<div class="b" style="left:1096.3px;top:146.3px;width:217.2px;height:35.5px;background:transparent;border:1px solid #606060;border-radius:6px"></div>
<div class="t t17" style="left:1099.4px;top:154.0px;transform:scaleX(0.9215);transform-origin:0 50%;">General</div>
<div class="t t26" style="left:1107.0px;top:195.8px;transform:scaleX(0.8086);transform-origin:0 50%;">$</div>
<div class="t t27" style="left:1163.5px;top:194.9px;transform:scaleX(0.9494);transform-origin:0 50%;">%</div>
<div class="b" style="left:1235.0px;top:194.0px;width:1.2px;height:36.0px;background:#4b4b4b;"></div>
<div class="t t25" style="left:1260.4px;top:196.4px;">0</div>
<div class="t t25" style="left:1248.4px;top:208.3px;letter-spacing:0.01px;">.00</div>
<div class="t t25" style="left:1286.9px;top:196.4px;letter-spacing:0.11px;">.00</div>
<div class="t t25" style="left:1295.7px;top:208.3px;transform:scaleX(0.9592);transform-origin:0 50%;">.0</div>
<div class="t t18" style="left:1163.5px;top:252.9px;letter-spacing:0.18px;">Number</div>
<div class="t t28" style="left:1347.6px;top:192.5px;transform:scaleX(0.9538);transform-origin:0 50%;">Insert</div>
<div class="t t28" style="left:1410.0px;top:192.5px;transform:scaleX(0.9262);transform-origin:0 50%;">Delete</div>
<div class="t t28" style="left:1472.9px;top:190.5px;transform:scaleX(0.9703);transform-origin:0 50%;">Format</div>
<div class="t t18" style="left:1418.1px;top:253.5px;transform:scaleX(0.9167);transform-origin:0 50%;">Cells</div>
<div class="t t17" style="left:1593.3px;top:141.9px;letter-spacing:-0.01px;">AutoSum</div>
<div class="t t17" style="left:1593.3px;top:180.3px;transform:scaleX(0.9023);transform-origin:0 50%;">Fill</div>
<div class="t t17" style="left:1593.3px;top:219.5px;transform:scaleX(0.9035);transform-origin:0 50%;">Clear</div>
<div class="t t29" style="left:1730.3px;top:138.8px;transform:scaleX(0.9776);transform-origin:0 50%;">A</div>
<div class="t t30" style="left:1731.0px;top:158.1px;transform:scaleX(0.9102);transform-origin:0 50%;">Z</div>
<div class="t t28" style="left:1725.4px;top:190.1px;letter-spacing:0.21px;">Sort &amp;</div>
<div class="t t28" style="left:1724.8px;top:214.1px;transform:scaleX(0.9574);transform-origin:0 50%;">Filter</div>
<div class="t t28" style="left:1795.3px;top:190.1px;">Find &amp;</div>
<div class="t t28" style="left:1790.5px;top:214.1px;transform:scaleX(0.9295);transform-origin:0 50%;">Select</div>
<div class="t t18" style="left:1682.5px;top:253.5px;transform:scaleX(0.9832);transform-origin:0 50%;">Editing</div>
<div class="t t28" style="left:1885.0px;top:190.1px;letter-spacing:0.10px;">Add-ins</div>
<div class="t t18" style="left:1888.5px;top:253.5px;transform:scaleX(0.9895);transform-origin:0 50%;">Add-ins</div>
<div class="t t28" style="left:1980.2px;top:191.1px;transform:scaleX(0.9425);transform-origin:0 50%;">Analyze</div>
<div class="t t28" style="left:1992.5px;top:214.5px;transform:scaleX(0.9474);transform-origin:0 50%;">Data</div>
<div aria-label="FINMODELSLAB" style="position:absolute;left:2290px;top:152.800px;width:370px;height:56px;font:bold 49px/56px 'Liberation Sans',sans-serif;color:#fff;-webkit-text-stroke:1.600px #fff;white-space:nowrap"><span style="position:absolute;left:5.6px;top:0;transform:scaleX(0.639);transform-origin:0 0;-webkit-text-stroke-width:2.8px">F</span><span style="position:absolute;left:31.6px;top:0;transform:scaleX(0.514);transform-origin:0 0;-webkit-text-stroke-width:2.8px">I</span><span style="position:absolute;left:46.2px;top:0;transform:scaleX(0.789);transform-origin:0 0;-webkit-text-stroke-width:2.8px">N</span><span style="position:absolute;left:80.3px;top:0;transform:scaleX(0.984);transform-origin:0 0;-webkit-text-stroke-width:1.0px">M</span><span style="position:absolute;left:123.4px;top:0;transform:scaleX(0.962);transform-origin:0 0;-webkit-text-stroke-width:1.2px">O</span><span style="position:absolute;left:164.7px;top:0;transform:scaleX(0.789);transform-origin:0 0;-webkit-text-stroke-width:2.8px">D</span><span style="position:absolute;left:199.6px;top:0;transform:scaleX(0.586);transform-origin:0 0;-webkit-text-stroke-width:2.8px">E</span><span style="position:absolute;left:225.6px;top:0;transform:scaleX(0.584);transform-origin:0 0;-webkit-text-stroke-width:2.8px">L</span><span style="position:absolute;left:245.1px;top:0;transform:scaleX(0.778);transform-origin:0 0;-webkit-text-stroke-width:2.8px">S</span><span style="position:absolute;left:276.7px;top:0;transform:scaleX(0.587);transform-origin:0 0;-webkit-text-stroke-width:2.8px">L</span><span style="position:absolute;left:294.6px;top:0;transform:scaleX(1.044);transform-origin:0 0;-webkit-text-stroke-width:1.0px">A</span><span style="position:absolute;left:335.2px;top:0;transform:scaleX(0.744);transform-origin:0 0;-webkit-text-stroke-width:2.8px">B</span></div>
<div class="t t31" style="left:2294.5px;top:204.0px;letter-spacing:25.64px;">Templates</div>
<div class="b" style="left:2860.5px;top:278.0px;width:30.5px;height:1393.0px;background:#0a0a0a;"></div>
<div class="b" style="left:2861.2px;top:281.0px;width:29.3px;height:1390.5px;background:#121212;border-radius:14px"></div>
<div class="b" style="left:2870.0px;top:304.0px;width:12.0px;height:531.3px;background:#9a9a9a;border-radius:6px"></div>
<div class="b" style="left:11.0px;top:1670.2px;width:2880.0px;height:48.0px;background:#0a0a0a;"></div>
<div class="b" style="left:11.0px;top:1718.2px;width:2880.0px;height:32.8px;background:#141414;border-top:1.200px solid #383838"></div>
<div class="t t32" style="left:190.4px;top:1682.6px;transform:scaleX(0.9947);transform-origin:0 50%;">Contents</div>
<div class="b" style="left:292.0px;top:1681.0px;width:1.2px;height:27.0px;background:#555;"></div>
<div class="b" style="left:432.6px;top:1681.0px;width:1.2px;height:27.0px;background:#555;"></div>
<div class="b" style="left:551.7px;top:1681.0px;width:1.2px;height:27.0px;background:#555;"></div>
<div class="b" style="left:644.0px;top:1681.0px;width:1.2px;height:27.0px;background:#555;"></div>
<div class="b" style="left:733.0px;top:1681.0px;width:1.2px;height:27.0px;background:#555;"></div>
<div class="b" style="left:835.1px;top:1681.0px;width:1.2px;height:27.0px;background:#555;"></div>
<div class="b" style="left:935.1px;top:1681.0px;width:1.2px;height:27.0px;background:#555;"></div>
<div class="b" style="left:1060.9px;top:1681.0px;width:1.2px;height:27.0px;background:#555;"></div>
<div class="b" style="left:1163.8px;top:1681.0px;width:1.2px;height:27.0px;background:#555;"></div>
<div class="b" style="left:1218.7px;top:1681.0px;width:1.2px;height:27.0px;background:#555;"></div>
<div class="b" style="left:1280.0px;top:1681.0px;width:1.2px;height:27.0px;background:#555;"></div>
<div class="b" style="left:1341.0px;top:1681.0px;width:1.2px;height:27.0px;background:#555;"></div>
<div class="b" style="left:1468.9px;top:1681.0px;width:1.2px;height:27.0px;background:#555;"></div>
<div class="b" style="left:1596.7px;top:1681.0px;width:1.2px;height:27.0px;background:#555;"></div>
<div class="b" style="left:1723.9px;top:1681.0px;width:1.2px;height:27.0px;background:#555;"></div>
<div class="b" style="left:1785.0px;top:1681.0px;width:1.2px;height:27.0px;background:#555;"></div>
<div class="b" style="left:1870.0px;top:1681.0px;width:1.2px;height:27.0px;background:#555;"></div>
<div class="b" style="left:1967.8px;top:1681.0px;width:1.2px;height:27.0px;background:#555;"></div>
<div class="b" style="left:2045.1px;top:1681.0px;width:1.2px;height:27.0px;background:#555;"></div>
<div class="b" style="left:298.7px;top:1675.8px;width:128.2px;height:36.0px;background:#ffee6a;border-radius:7px"></div>
<div class="t t33" style="left:312.9px;top:1682.4px;transform:scaleX(0.9906);transform-origin:0 50%;">Dashboard</div>
<div class="b" style="left:439.7px;top:1675.8px;width:106.5px;height:36.0px;background:#ffee6a;border-radius:7px"></div>
<div class="t t33" style="left:453.9px;top:1682.4px;transform:scaleX(0.9474);transform-origin:0 50%;">Revenue</div>
<div class="b" style="left:558.8px;top:1675.8px;width:79.4px;height:36.0px;background:#ffee6a;border-radius:7px"></div>
<div class="t t33" style="left:573.0px;top:1682.4px;transform:scaleX(0.8408);transform-origin:0 50%;">COGS</div>
<div class="b" style="left:651.0px;top:1675.8px;width:76.0px;height:36.0px;background:#ffee6a;border-radius:7px"></div>
<div class="t t33" style="left:665.2px;top:1682.4px;transform:scaleX(0.8317);transform-origin:0 50%;">OPEX</div>
<div class="b" style="left:739.9px;top:1675.8px;width:89.3px;height:36.0px;background:#ffee6a;border-radius:7px"></div>
<div class="t t33" style="left:754.1px;top:1682.4px;transform:scaleX(0.9674);transform-origin:0 50%;">Payroll</div>
<div class="b" style="left:842.0px;top:1675.8px;width:87.2px;height:36.0px;background:#ffee6a;border-radius:7px"></div>
<div class="t t33" style="left:856.2px;top:1682.4px;transform:scaleX(0.8421);transform-origin:0 50%;">CAPEX</div>
<div class="b" style="left:941.8px;top:1675.8px;width:113.0px;height:36.0px;background:#ffee6a;border-radius:7px"></div>
<div class="t t33" style="left:956.0px;top:1682.4px;transform:scaleX(0.9722);transform-origin:0 50%;">CapTable</div>
<div class="b" style="left:1067.8px;top:1675.8px;width:90.1px;height:36.0px;background:#ffee6a;border-radius:7px"></div>
<div class="t t33" style="left:1082.0px;top:1682.4px;transform:scaleX(0.9624);transform-origin:0 50%;">Capital</div>
<div class="b" style="left:1170.9px;top:1675.8px;width:42.1px;height:36.0px;background:#4db3e8;border-radius:7px"></div>
<div class="t t33" style="left:1184.4px;top:1682.4px;transform:scaleX(0.7756);transform-origin:0 50%;">IS</div>
<div class="b" style="left:1225.8px;top:1675.8px;width:48.3px;height:36.0px;background:#4db3e8;border-radius:7px"></div>
<div class="t t33" style="left:1239.3px;top:1682.4px;transform:scaleX(0.7759);transform-origin:0 50%;">CF</div>
<div class="b" style="left:1286.9px;top:1675.8px;width:48.1px;height:36.0px;background:#4db3e8;border-radius:7px"></div>
<div class="t t33" style="left:1300.4px;top:1682.4px;transform:scaleX(0.7677);transform-origin:0 50%;">BS</div>
<div class="b" style="left:1348.0px;top:1675.8px;width:115.2px;height:36.0px;background:#4db3e8;border-radius:7px"></div>
<div class="t t33" style="left:1362.2px;top:1682.4px;transform:scaleX(0.9478);transform-origin:0 50%;">Scenarios</div>
<div class="b" style="left:1476.0px;top:1675.8px;width:115.0px;height:36.0px;background:#4db3e8;border-radius:7px"></div>
<div class="t t33" style="left:1490.2px;top:1682.4px;letter-spacing:0.28px;">Valuation</div>
<div class="b" style="left:1731.0px;top:1675.8px;width:48.3px;height:36.0px;background:#4db3e8;border-radius:7px"></div>
<div class="t t33" style="left:1744.5px;top:1682.4px;transform:scaleX(0.7750);transform-origin:0 50%;">BE</div>
<div class="b" style="left:1791.9px;top:1675.8px;width:72.2px;height:36.0px;background:#4db3e8;border-radius:7px"></div>
<div class="t t33" style="left:1806.1px;top:1682.4px;transform:scaleX(0.8507);transform-origin:0 50%;">ROIC</div>
<div class="b" style="left:1876.9px;top:1675.8px;width:85.2px;height:36.0px;background:#4db3e8;border-radius:7px"></div>
<div class="t t33" style="left:1891.1px;top:1682.4px;transform:scaleX(0.9364);transform-origin:0 50%;">Charts</div>
<div class="b" style="left:1974.9px;top:1675.8px;width:64.3px;height:36.0px;background:#4db3e8;border-radius:7px"></div>
<div class="t t33" style="left:1989.1px;top:1682.4px;transform:scaleX(0.8253);transform-origin:0 50%;">KPIs</div>
<div class="b" style="left:2052.0px;top:1675.8px;width:20.0px;height:36.0px;background:#4db3e8;border-radius:7px 0 0 7px"></div>
<div style="position:absolute;left:2052px;top:1675.800px;width:20px;height:36px;overflow:hidden"><div style="position:absolute;left:14px;top:6.500px;font:20.600px/27px 'Liberation Sans',sans-serif;color:#14181c;white-space:pre">Sens</div></div>
<div style="position:absolute;left:1603.800px;top:1670.200px;width:114.600px;height:41.800px;background:linear-gradient(#ffffff 45%,#cfe6f6);border-radius:0 0 8px 8px"></div>
<div class="t t34" style="left:1616.5px;top:1678.4px;letter-spacing:0.20px;">Summary</div>
<div class="b" style="left:1616.3px;top:1704.9px;width:89.7px;height:3.0px;background:#1d8348;"></div>
<div class="b" style="left:2216.7px;top:1681.0px;width:643.8px;height:25.6px;background:#161616;border-radius:12.800px"></div>
<div class="b" style="left:2242.0px;top:1687.0px;width:535.6px;height:12.6px;background:#9d9d9d;border-radius:6.300px"></div>
<div class="t t35" style="left:27.3px;top:1726.2px;transform:scaleX(0.9406);transform-origin:0 50%;">Ready</div>
<div class="t t36" style="left:173.4px;top:1726.2px;letter-spacing:0.03px;">Accessibility: Investigate</div>
<div class="b" style="left:2445.0px;top:1719.2px;width:60.4px;height:31.8px;background:#272727;"></div>
<div class="t t35" style="left:2840.2px;top:1726.0px;letter-spacing:0.02px;">115%</div>
<svg width="2902" height="1762" viewBox="0 0 2902 1762" style="position:absolute;left:0;top:0;pointer-events:none" fill="none">
<g><rect x="38" y="34.800" width="20" height="24.400" rx="3" fill="#2a7d30"/><path d="M38 43.500V37.800a3 3 0 0 1 3-3H47.500V43.500z" fill="#5fd05c"/><path d="M47.500 34.800H55a3 3 0 0 1 3 3V43.500H47.500z" fill="#b4e463"/><rect x="35" y="43.100" width="13" height="12.600" rx="2.500" fill="#0e6a3e"/><text x="41.500" y="53" font-family="Liberation Sans,sans-serif" font-weight="bold" font-size="12.500" fill="#fff" text-anchor="middle">x</text></g>
<path d="M406.5 45.2l6 6 6-6" stroke="#fff" stroke-width="1.8" stroke-linecap="round" stroke-linejoin="round"/>
<circle cx="2489" cy="43.5" r="6.6" stroke="#fff" stroke-width="1.6"/><path d="M2484.3 48.6L2476.3 57.2" stroke="#fff" stroke-width="1.6" stroke-linecap="round"/>
<defs><clipPath id="av"><circle cx="2571" cy="47" r="18"/></clipPath><linearGradient id="avg" x1="0" y1="0" x2="0" y2="1"><stop offset="0" stop-color="#b9c0e6"/><stop offset="0.3" stop-color="#a9b8de"/><stop offset="0.36" stop-color="#a9d0d8"/><stop offset="1" stop-color="#b9dedd"/></linearGradient></defs><g clip-path="url(#av)"><rect x="2553" y="29" width="36" height="36" fill="url(#avg)"/><path d="M2565.500 56h12.500l1 10h-15z" fill="#94705d"/><path d="M2553 66c3-6 7.500-8.500 13-9.800l3.500 9.800zM2589 66c-2.500-6-6.500-8.500-11.500-9.800l-3 9.800z" fill="#ddd5c8"/><ellipse cx="2571.500" cy="46.500" rx="7.300" ry="10.200" fill="#a6826f"/><path d="M2564.400 44c0-5.500 3-8.200 7.100-8.200s7.200 2.700 7.200 8.200c-2-3-4.300-4.200-7.200-4.200s-5.200 1.200-7.100 4.200z" fill="#8a756c"/><path d="M2567.300 46.300h3M2573 46.300h3M2569.300 53.300h4.600" stroke="#7a5a4c" stroke-width="1" opacity="0.7"/></g>
<path d="M2629.500 43.5l6.500-7.800h10.500l6.500 7.800-11.800 13.300zM2629.500 43.500h23.500M2636 35.700l5.300 7.800 5.200-7.800M2635.800 43.500l5.500 13.300 5.300-13.300" stroke="#fff" stroke-width="1.5" stroke-linejoin="round"/>
<path d="M2703 46h16" stroke="#fff" stroke-width="1.6"/>
<rect x="2775.800" y="42.800" width="11.400" height="11.400" rx="2.600" stroke="#fff" stroke-width="1.6"/><path d="M2779.300 39.800h7.500a3.800 3.800 0 0 1 3.800 3.800v7.300" stroke="#fff" stroke-width="1.6"/>
<path d="M2848 40l14.500 14.500M2862.500 40l-14.500 14.500" stroke="#fff" stroke-width="1.7" stroke-linecap="round"/>
<path d="M2629.800 97.500h14.200v10.800h-8.300l-4.300 3.900v-3.900h-1.600z" stroke="#fff" stroke-width="1.5" stroke-linejoin="round"/>
<path d="M2781.300 101.500h-5.300v12.300h13.800v-4.200" stroke="#10301c" stroke-width="1.5" stroke-linejoin="round"/><path d="M2780.300 109.500c0.500-5 3.300-8 8-8.300v-3.400l6.300 5.700-6.300 5.600v-3.500c-3.600 0-6 1.200-8 3.900z" stroke="#10301c" stroke-width="1.400" stroke-linejoin="round"/>
<path d="M2858.200 103.800l4 4 4-4" stroke="#0e2a18" stroke-width="1.6" stroke-linecap="round" stroke-linejoin="round"/>
<path d="M43.800 283.500v13.800h-13.800z" fill="#8a8a8a"/>
<path d="M2852.500 283l4.500 14" stroke="#fff" stroke-width="1.300"/>
<g><path d="M71.5 1160.5H1044.5" stroke="#58aad6" stroke-width="1"/><path d="M71.5 1202.5H1044.5" stroke="#58aad6" stroke-width="1"/><path d="M71.5 1244.5H1044.5" stroke="#58aad6" stroke-width="1"/><path d="M71.5 1287.5H1044.5" stroke="#58aad6" stroke-width="1"/><path d="M71.5 1329.5H1044.5" stroke="#58aad6" stroke-width="1"/><path d="M71.5 1371.5H1044.5" stroke="#58aad6" stroke-width="1"/><path d="M71.5 1413.5H1044.5" stroke="#58aad6" stroke-width="1"/><path d="M71.5 1455.5H1044.5" stroke="#58aad6" stroke-width="1"/><path d="M71.5 1497.5H1044.5" stroke="#58aad6" stroke-width="1"/><path d="M71.5 1160.8V1503.0" stroke="#58aad6" stroke-width="1"/><path d="M266.5 1160.8V1503.0" stroke="#58aad6" stroke-width="1"/><path d="M460.5 1160.8V1503.0" stroke="#58aad6" stroke-width="1"/><path d="M655.5 1160.8V1503.0" stroke="#58aad6" stroke-width="1"/><path d="M849.5 1160.8V1503.0" stroke="#58aad6" stroke-width="1"/><path d="M1044.5 1160.8V1503.0" stroke="#58aad6" stroke-width="1"/><path d="M71.5 1497.5H1044.5" stroke="#3f79b5" stroke-width="1.4"/><polyline points="168.8,1395.3 363.4,1348.6 558.0,1299.4 752.6,1248.0 947.2,1198.6" stroke="#e9786c" stroke-width="3.2" stroke-linejoin="round"/><circle cx="168.8" cy="1395.3" r="6" fill="#e9786c"/><circle cx="363.4" cy="1348.6" r="6" fill="#e9786c"/><circle cx="558.0" cy="1299.4" r="6" fill="#e9786c"/><circle cx="752.6" cy="1248.0" r="6" fill="#e9786c"/><circle cx="947.2" cy="1198.6" r="6" fill="#e9786c"/><polyline points="168.8,1445.5 363.4,1410.9 558.0,1370.5 752.6,1329.2 947.2,1290.5" stroke="#5c9a3e" stroke-width="3.2" stroke-linejoin="round"/><circle cx="168.8" cy="1445.5" r="6" fill="#5c9a3e"/><circle cx="363.4" cy="1410.9" r="6" fill="#5c9a3e"/><circle cx="558.0" cy="1370.5" r="6" fill="#5c9a3e"/><circle cx="752.6" cy="1329.2" r="6" fill="#5c9a3e"/><circle cx="947.2" cy="1290.5" r="6" fill="#5c9a3e"/><polyline points="168.8,1466.2 363.4,1444.1 558.0,1413.7 752.6,1382.6 947.2,1353.4" stroke="#4b50d2" stroke-width="3.2" stroke-linejoin="round"/><circle cx="168.8" cy="1466.2" r="6" fill="#4b50d2"/><circle cx="363.4" cy="1444.1" r="6" fill="#4b50d2"/><circle cx="558.0" cy="1413.7" r="6" fill="#4b50d2"/><circle cx="752.6" cy="1382.6" r="6" fill="#4b50d2"/><circle cx="947.2" cy="1353.4" r="6" fill="#4b50d2"/></g>
<path d="M329.5 1130.400H373.6" stroke="#e9786c" stroke-width="3.2"/><circle cx="351.6" cy="1130.400" r="4.600" fill="#e9786c"/>
<path d="M491.0 1130.400H535.4" stroke="#5c9a3e" stroke-width="3.2"/><circle cx="513.2" cy="1130.400" r="4.600" fill="#5c9a3e"/>
<path d="M653.7 1130.400H698.3" stroke="#4b50d2" stroke-width="3.2"/><circle cx="676.0" cy="1130.400" r="4.600" fill="#4b50d2"/>
<g><path d="M1176.4 1160.5H2765.2" stroke="#58aad6" stroke-width="1"/><path d="M1176.4 1198.5H2765.2" stroke="#58aad6" stroke-width="1"/><path d="M1176.4 1235.5H2765.2" stroke="#58aad6" stroke-width="1"/><path d="M1176.4 1272.5H2765.2" stroke="#58aad6" stroke-width="1"/><path d="M1176.4 1310.5H2765.2" stroke="#58aad6" stroke-width="1"/><path d="M1176.4 1347.5H2765.2" stroke="#58aad6" stroke-width="1"/><path d="M1176.4 1385.5H2765.2" stroke="#58aad6" stroke-width="1"/><path d="M1176.4 1422.5H2765.2" stroke="#58aad6" stroke-width="1"/><path d="M1176.4 1460.5H2765.2" stroke="#58aad6" stroke-width="1"/><path d="M1176.4 1497.5H2765.2" stroke="#58aad6" stroke-width="1"/><path d="M1176.5 1160.6V1503.3" stroke="#58aad6" stroke-width="1"/><path d="M1308.5 1160.6V1503.3" stroke="#58aad6" stroke-width="1"/><path d="M1441.5 1160.6V1503.3" stroke="#58aad6" stroke-width="1"/><path d="M1573.5 1160.6V1503.3" stroke="#58aad6" stroke-width="1"/><path d="M1706.5 1160.6V1503.3" stroke="#58aad6" stroke-width="1"/><path d="M1838.5 1160.6V1503.3" stroke="#58aad6" stroke-width="1"/><path d="M1970.5 1160.6V1503.3" stroke="#58aad6" stroke-width="1"/><path d="M2103.5 1160.6V1503.3" stroke="#58aad6" stroke-width="1"/><path d="M2235.5 1160.6V1503.3" stroke="#58aad6" stroke-width="1"/><path d="M2368.5 1160.6V1503.3" stroke="#58aad6" stroke-width="1"/><path d="M2500.5 1160.6V1503.3" stroke="#58aad6" stroke-width="1"/><path d="M2632.5 1160.6V1503.3" stroke="#58aad6" stroke-width="1"/><path d="M2765.5 1160.6V1503.3" stroke="#58aad6" stroke-width="1"/><rect x="1176.4" y="1160.6" width="1588.8" height="337.2" stroke="#41a6e2" stroke-width="2.4"/><polyline points="1242.6,1194.3 1375.0,1194.3 1507.4,1194.3 1639.8,1194.3 1772.2,1194.3 1904.6,1194.3 2037.0,1194.3 2169.4,1194.3 2301.8,1194.3 2434.2,1194.3 2566.6,1194.3 2699.0,1194.3" stroke="#e9786c" stroke-width="3.2" stroke-linejoin="round"/><circle cx="1242.6" cy="1194.3" r="6" fill="#e9786c"/><circle cx="1375.0" cy="1194.3" r="6" fill="#e9786c"/><circle cx="1507.4" cy="1194.3" r="6" fill="#e9786c"/><circle cx="1639.8" cy="1194.3" r="6" fill="#e9786c"/><circle cx="1772.2" cy="1194.3" r="6" fill="#e9786c"/><circle cx="1904.6" cy="1194.3" r="6" fill="#e9786c"/><circle cx="2037.0" cy="1194.3" r="6" fill="#e9786c"/><circle cx="2169.4" cy="1194.3" r="6" fill="#e9786c"/><circle cx="2301.8" cy="1194.3" r="6" fill="#e9786c"/><circle cx="2434.2" cy="1194.3" r="6" fill="#e9786c"/><circle cx="2566.6" cy="1194.3" r="6" fill="#e9786c"/><circle cx="2699.0" cy="1194.3" r="6" fill="#e9786c"/><polyline points="1242.6,1343.4 1375.0,1343.4 1507.4,1343.4 1639.8,1343.4 1772.2,1343.4 1904.6,1343.4 2037.0,1343.4 2169.4,1343.4 2301.8,1343.4 2434.2,1343.4 2566.6,1343.4 2699.0,1343.4" stroke="#5c9a3e" stroke-width="3.2" stroke-linejoin="round"/><circle cx="1242.6" cy="1343.4" r="6" fill="#5c9a3e"/><circle cx="1375.0" cy="1343.4" r="6" fill="#5c9a3e"/><circle cx="1507.4" cy="1343.4" r="6" fill="#5c9a3e"/><circle cx="1639.8" cy="1343.4" r="6" fill="#5c9a3e"/><circle cx="1772.2" cy="1343.4" r="6" fill="#5c9a3e"/><circle cx="1904.6" cy="1343.4" r="6" fill="#5c9a3e"/><circle cx="2037.0" cy="1343.4" r="6" fill="#5c9a3e"/><circle cx="2169.4" cy="1343.4" r="6" fill="#5c9a3e"/><circle cx="2301.8" cy="1343.4" r="6" fill="#5c9a3e"/><circle cx="2434.2" cy="1343.4" r="6" fill="#5c9a3e"/><circle cx="2566.6" cy="1343.4" r="6" fill="#5c9a3e"/><circle cx="2699.0" cy="1343.4" r="6" fill="#5c9a3e"/><polyline points="1242.6,1385.4 1375.0,1387.6 1507.4,1392.1 1639.8,1396.6 1772.2,1401.9 1904.6,1406.4 2037.0,1410.1 2169.4,1413.1 2301.8,1414.6 2434.2,1415.4 2566.6,1416.1 2699.0,1416.1" stroke="#4b50d2" stroke-width="3.2" stroke-linejoin="round"/><circle cx="1242.6" cy="1385.4" r="6" fill="#4b50d2"/><circle cx="1375.0" cy="1387.6" r="6" fill="#4b50d2"/><circle cx="1507.4" cy="1392.1" r="6" fill="#4b50d2"/><circle cx="1639.8" cy="1396.6" r="6" fill="#4b50d2"/><circle cx="1772.2" cy="1401.9" r="6" fill="#4b50d2"/><circle cx="1904.6" cy="1406.4" r="6" fill="#4b50d2"/><circle cx="2037.0" cy="1410.1" r="6" fill="#4b50d2"/><circle cx="2169.4" cy="1413.1" r="6" fill="#4b50d2"/><circle cx="2301.8" cy="1414.6" r="6" fill="#4b50d2"/><circle cx="2434.2" cy="1415.4" r="6" fill="#4b50d2"/><circle cx="2566.6" cy="1416.1" r="6" fill="#4b50d2"/><circle cx="2699.0" cy="1416.1" r="6" fill="#4b50d2"/></g>
<path d="M1725.4 1130.400H1770.7" stroke="#e9786c" stroke-width="3.2"/><circle cx="1748.1" cy="1130.400" r="4.600" fill="#e9786c"/>
<path d="M1886.0 1130.400H1932.5" stroke="#5c9a3e" stroke-width="3.2"/><circle cx="1909.2" cy="1130.400" r="4.600" fill="#5c9a3e"/>
<path d="M2049.4 1130.400H2095.9" stroke="#4b50d2" stroke-width="3.2"/><circle cx="2072.7" cy="1130.400" r="4.600" fill="#4b50d2"/>
<path d="M63 148.900H57V181.200H74.500M79.500 148.900H85.200V158.500" stroke="#9a9a9a" stroke-width="3.400"/><path d="M63.600 151.600V146.200H67.600a3.600 3.600 0 0 1 7.200 0H78.800V151.600z" stroke="#a6a6a6" stroke-width="2" fill="#292929"/><rect x="75.900" y="159.900" width="19.300" height="24.900" stroke="#bdbdbd" stroke-width="2" fill="#292929"/>
<path d="M67.4 224.6l3.8 3.8 3.8 -3.8" stroke="#5f5f5f" stroke-width="1.7" stroke-linecap="round" stroke-linejoin="round"/>
<path d="M119.500 141l9.500 19M129.500 141l-9.500 19" stroke="#e8e8e8" stroke-width="1.5" stroke-linecap="round"/><circle cx="119.300" cy="161.300" r="2.400" stroke="#3a96dd" stroke-width="2.100"/><circle cx="129.700" cy="161.300" r="2.400" stroke="#3a96dd" stroke-width="2.100"/>
<path d="M120.500 197.500h-8v-17.500h9l3 3" stroke="#d6d6d6" stroke-width="1.600" stroke-linejoin="round"/><path d="M122 184.500h8l5.500 5.500v12.500h-13.500z" stroke="#d6d6d6" stroke-width="1.600" stroke-linejoin="round" fill="#292929"/><path d="M130 184.500v5.500h5.500M125.500 194.500h6.500M125.500 198.300h6.500" stroke="#d6d6d6" stroke-width="1.400"/>
<path d="M211.8 189.7l3.8 3.8 3.8 -3.8" stroke="#fff" stroke-width="1.7" stroke-linecap="round" stroke-linejoin="round"/>
<path d="M125.700 224.300l7.900-6.200 2.700 3.500-7.900 6.200" stroke="#ececec" stroke-width="1.600" stroke-linejoin="round"/><path d="M121 221.800l9.700 9.200-2.600 3-9.900-9z" stroke="#ececec" stroke-width="1.600" stroke-linejoin="round"/><path d="M118.400 225.200l-6 3.500 10.300 11.200 5.300-5.800z" stroke="#f3c76a" stroke-width="1.500" stroke-linejoin="round"/><path d="M115.600 232.200l7.100 7.700 3.900-4.300-4.300-3.700c-2.400 0.900-4.500 0.900-6.700 0.300z" fill="#f0a32e"/>
<path d="M265.5 268.0V257.0H276.5M269.0 260.5L276.5 268.0M276.5 262.0V268.0H270.5" stroke="#e6e6e6" stroke-width="1.5"/>
<path d="M463.4 162.6l3.8 3.8 3.8 -3.8" stroke="#fff" stroke-width="1.7" stroke-linecap="round" stroke-linejoin="round"/>
<path d="M531.4 162.6l3.8 3.8 3.8 -3.8" stroke="#fff" stroke-width="1.7" stroke-linecap="round" stroke-linejoin="round"/>
<path d="M571.500 157.500l3.300-3.300 3.300 3.300" stroke="#3a96dd" stroke-width="1.700" stroke-linecap="round" stroke-linejoin="round"/>
<path d="M609.500 154.500l3.300 3.300 3.300-3.300" stroke="#3a96dd" stroke-width="1.700" stroke-linecap="round" stroke-linejoin="round"/>
<path d="M415.6 210.1l3.8 3.8 3.8 -3.8" stroke="#fff" stroke-width="1.7" stroke-linecap="round" stroke-linejoin="round"/>
<g stroke="#d6d6d6" stroke-width="1.600" stroke-dasharray="1.600 2.150"><path d="M444.800 200.600h22M444.800 200.600v19.500M466.800 200.600v19.500M455.800 200.600v19.500M444.800 210.500h22"/></g><path d="M444 222h23.500" stroke="#f0f0f0" stroke-width="2"/>
<path d="M480.5 210.1l3.8 3.8 3.8 -3.8" stroke="#fff" stroke-width="1.7" stroke-linecap="round" stroke-linejoin="round"/>
<path d="M513.500 211l7.500-8.500 8 6.500-6.800 8.200zM520.500 203.500v-2.700a1.800 1.800 0 0 1 3.600 0v4" stroke="#e0e0e0" stroke-width="1.500" stroke-linejoin="round"/><path d="M527.800 206.500c2.700 0.800 3.700 3.200 3.200 6.200" stroke="#3a96dd" stroke-width="2" stroke-linecap="round"/>
<path d="M545.5 210.1l3.8 3.8 3.8 -3.8" stroke="#fff" stroke-width="1.7" stroke-linecap="round" stroke-linejoin="round"/>
<path d="M606.5 210.1l3.8 3.8 3.8 -3.8" stroke="#fff" stroke-width="1.7" stroke-linecap="round" stroke-linejoin="round"/>
<path d="M616.0 268.0V257.0H627.0M619.5 260.5L627.0 268.0M627.0 262.0V268.0H621.0" stroke="#e6e6e6" stroke-width="1.5"/>
<path d="M653.2 152.7H674.8M656.4 159.0H671.6M653.2 165.2H674.8" stroke="#d6d6d6" stroke-width="1.600"/>
<path d="M692.0 157.0H714.0M695.3 163.2H710.7M692.0 169.3H714.0" stroke="#d6d6d6" stroke-width="1.600"/>
<path d="M731.0 162.5H753.0M734.3 168.7H749.7M731.0 175.1H753.0" stroke="#d6d6d6" stroke-width="1.600"/>
<path d="M779.500 173.500l16.500-16.500M789.500 156.800h6.700v6.700" stroke="#3a96dd" stroke-width="1.800" stroke-linecap="round" stroke-linejoin="round"/>
<path d="M806.6 162.5l3.8 3.8 3.8 -3.8" stroke="#fff" stroke-width="1.7" stroke-linecap="round" stroke-linejoin="round"/>
<path d="M881 171.300h6.300a3.300 3.300 0 0 0 0-6.800h-1.500M884.300 168l-3.500 3.300 3.500 3.300" stroke="#3a96dd" stroke-width="1.700" stroke-linecap="round" stroke-linejoin="round"/>
<path d="M653.2 202.2H674.8M653.2 208.3H668.3M653.2 214.5H674.8M653.2 220.5H668.3" stroke="#d6d6d6" stroke-width="1.600"/>
<path d="M692.0 202.2H714.0M695.3 208.3H710.7M692.0 214.5H714.0M695.3 220.5H710.7" stroke="#d6d6d6" stroke-width="1.600"/>
<path d="M731.0 202.2H753.0M737.6 208.3H753.0M731.0 214.5H753.0M737.6 220.5H753.0" stroke="#d6d6d6" stroke-width="1.600"/>
<path d="M774.0 202.200H796.3M785.0 208.300H796.3M785.0 214.500H796.3M774.0 220.500H796.3" stroke="#d6d6d6" stroke-width="1.600"/>
<path d="M774.5 211.400h8M777.7 208.200l-3.200 3.200 3.200 3.200" stroke="#3a96dd" stroke-width="1.700" stroke-linecap="round" stroke-linejoin="round"/>
<path d="M813.0 202.200H835.3M824.0 208.300H835.3M824.0 214.500H835.3M813.0 220.500H835.3" stroke="#d6d6d6" stroke-width="1.600"/>
<path d="M813.0 211.400h8M818.0 208.200l3.200 3.200-3.200 3.200" stroke="#3a96dd" stroke-width="1.700" stroke-linecap="round" stroke-linejoin="round"/>
<path d="M867.200 200.700h22.300v21.400h-22.300zM867.200 205h22.300M867.200 217.800h22.300M878.300 200.700v4.300M878.300 217.800v4.300" stroke="#d6d6d6" stroke-width="1.600"/><rect x="867.200" y="205" width="22.300" height="12.800" stroke="#3a96dd" stroke-width="1.800"/><path d="M871 211.400h14.500M873.800 208.600l-2.800 2.800 2.800 2.800M882.700 208.600l2.800 2.800-2.800 2.800" stroke="#3a96dd" stroke-width="1.600" stroke-linecap="round" stroke-linejoin="round"/>
<path d="M1050.4 210.4l3.8 3.8 3.8 -3.8" stroke="#fff" stroke-width="1.7" stroke-linecap="round" stroke-linejoin="round"/>
<path d="M1066.5 268.3V257.3H1077.5M1070.0 260.8L1077.5 268.3M1077.5 262.3V268.3H1071.5" stroke="#e6e6e6" stroke-width="1.5"/>
<path d="M1301.5 162.6l3.8 3.8 3.8 -3.8" stroke="#fff" stroke-width="1.7" stroke-linecap="round" stroke-linejoin="round"/>
<path d="M1138.4 210.6l3.8 3.8 3.8 -3.8" stroke="#fff" stroke-width="1.7" stroke-linecap="round" stroke-linejoin="round"/>
<circle cx="1215.800" cy="208.900" r="5.100" fill="#d6d6d6"/><path d="M1220.900 208.900C1220.900 215.200 1216.500 219.600 1209.300 221.400C1213 218.600 1214.800 216 1215 213z" fill="#d6d6d6"/>
<path d="M1246.0 205.600h10M1249.5 202l-3.500 3.600 3.500 3.600" stroke="#3a96dd" stroke-width="1.700" stroke-linecap="round" stroke-linejoin="round"/>
<path d="M1283.8 217.300h10M1290.3 213.700l3.500 3.600-3.500 3.600" stroke="#3a96dd" stroke-width="1.700" stroke-linecap="round" stroke-linejoin="round"/>
<path d="M1308.2 268.3V257.3H1319.2M1311.7 260.8L1319.2 268.3M1319.2 262.3V268.3H1313.2" stroke="#e6e6e6" stroke-width="1.5"/>
<path d="M1348.5 146.0h41.5v31.5h-41.5zM1362.3 146.0v31.5M1376.2 146.0v31.5M1348.5 156.5h41.5M1348.5 167.0h41.5" stroke="#c9c9c9" stroke-width="1.700"/><rect x="1361" y="156.300" width="32" height="11" fill="#1778d3"/><path d="M1376.500 156.300v11" stroke="#292929" stroke-width="1.500"/><path d="M1364 161.800h-17.500M1353.500 153.500l-8 8.300 8 8.300" stroke="#3f8fd6" stroke-width="2" stroke-linecap="round" stroke-linejoin="round"/><path d="M1350 161.800h14" stroke="#292929" stroke-width="0"/>
<path d="M1364.2 224.7l3.8 3.8 3.8 -3.8" stroke="#fff" stroke-width="1.7" stroke-linecap="round" stroke-linejoin="round"/>
<path d="M1413.6 146.0h41.5v31.5h-41.5zM1427.4 146.0v31.5M1441.3 146.0v31.5M1413.6 156.5h41.5M1413.6 167.0h41.5" stroke="#c9c9c9" stroke-width="1.700"/><rect x="1418.500" y="156.300" width="28" height="11" fill="#1778d3"/><path d="M1432.500 156.300v11" stroke="#292929" stroke-width="1.500"/><path d="M1441 154.500l15.500 15.500M1456.500 154.500l-15.500 15.500" stroke="#e0474c" stroke-width="2.200" stroke-linecap="round"/>
<path d="M1429.5 224.7l3.8 3.8 3.8 -3.8" stroke="#fff" stroke-width="1.7" stroke-linecap="round" stroke-linejoin="round"/>
<path d="M1479.8 146.0h40.5v31.5h-40.5zM1493.3 146.0v31.5M1506.8 146.0v31.5M1479.8 156.5h40.5M1479.8 167.0h40.5" stroke="#c9c9c9" stroke-width="1.700"/><rect x="1491" y="156.300" width="19" height="11" fill="#1778d3"/><path d="M1488.500 140h23M1488.500 137.500v5M1511.500 137.500v5" stroke="#3f8fd6" stroke-width="1.700"/>
<path d="M1495.4 223.3l3.8 3.8 3.8 -3.8" stroke="#fff" stroke-width="1.7" stroke-linecap="round" stroke-linejoin="round"/>
<path d="M1583.500 145.500v-3h-17l9.800 9.700-9.800 9.800h17v-3" stroke="#e6e6e6" stroke-width="1.700" stroke-linejoin="round"/>
<path d="M1695.4 150.9l3.8 3.8 3.8 -3.8" stroke="#fff" stroke-width="1.7" stroke-linecap="round" stroke-linejoin="round"/>
<rect x="1564" y="181.300" width="22" height="19.300" stroke="#d6d6d6" stroke-width="1.700"/><path d="M1564 185.500h22" stroke="#d6d6d6" stroke-width="1.500"/><path d="M1575 188v9.500M1571 194l4 4 4-4" stroke="#3a96dd" stroke-width="1.700" stroke-linecap="round" stroke-linejoin="round"/>
<path d="M1620.4 188.9l3.8 3.8 3.8 -3.8" stroke="#fff" stroke-width="1.7" stroke-linecap="round" stroke-linejoin="round"/>
<path d="M1564 232l12-12.500 9.500 9-12 12.500z" stroke="#d47bd8" stroke-width="1.700" stroke-linejoin="round"/><path d="M1564 232l5.500-5.700 9.500 9-5.500 5.700z" fill="#c44fc9"/>
<path d="M1638.9 228.1l3.8 3.8 3.8 -3.8" stroke="#fff" stroke-width="1.7" stroke-linecap="round" stroke-linejoin="round"/>
<path d="M1749 152h23l-8.300 10.500v11.500h-6.400v-11.500z" stroke="#d6d6d6" stroke-width="1.700" stroke-linejoin="round"/>
<path d="M1768.4 222.9l3.8 3.8 3.8 -3.8" stroke="#fff" stroke-width="1.7" stroke-linecap="round" stroke-linejoin="round"/>
<circle cx="1826" cy="156.800" r="15" stroke="#d6d6d6" stroke-width="1.800"/><path d="M1815.300 167.500l-16.300 16.300" stroke="#d6d6d6" stroke-width="1.800" stroke-linecap="round"/>
<path d="M1842.4 222.9l3.8 3.8 3.8 -3.8" stroke="#fff" stroke-width="1.7" stroke-linecap="round" stroke-linejoin="round"/>
<rect x="1896" y="141.800" width="40" height="40.500" stroke="#c9502a" stroke-width="2.600"/><rect x="1900.8" y="146.6" width="13.500" height="13.500" stroke="#c9502a" stroke-width="1.900"/><rect x="1900.8" y="164.3" width="13.500" height="13.500" stroke="#c9502a" stroke-width="1.900"/><rect x="1918.7" y="146.6" width="13.500" height="13.500" stroke="#c9502a" stroke-width="1.900"/><rect x="1918.7" y="164.3" width="13.500" height="13.500" stroke="#c9502a" stroke-width="1.900"/>
<path d="M1990 142h40v40.500h-40zM1990 146.500h40M1990 158.500h40M1990 170.500h40M2003.300 170.500v12M2016.700 170.500v12" stroke="#c9c9c9" stroke-width="1.700"/><rect x="1990" y="142" width="40" height="4.500" fill="#8a8a8a"/><circle cx="2009" cy="159" r="12.300" fill="#292929" stroke="#d6d6d6" stroke-width="1.700"/><rect x="2001.500" y="158" width="4.200" height="7" fill="#8f8f8f"/><rect x="2006.200" y="152.500" width="4.200" height="12.500" fill="#bdbdbd"/><rect x="2011" y="154.500" width="4.200" height="10.500" fill="#2f8fdd"/><path d="M2018 168l12.500 13" stroke="#d6d6d6" stroke-width="2.200" stroke-linecap="round"/>
<circle cx="2212.500" cy="198.600" r="56" fill="#fff"/><rect x="2181.800" y="173" width="61" height="52.800" fill="#5d62ec"/><rect x="2190" y="181.4" width="19.100" height="14.100" fill="#fff"/><rect x="2190" y="203.4" width="19.100" height="14.100" fill="#fff"/><rect x="2215.9" y="181.4" width="19.100" height="14.100" fill="#fff"/><rect x="2215.9" y="203.4" width="19.100" height="14.100" fill="#fff"/>
<rect x="2426.900" y="153.400" width="9.800" height="28.500" rx="4.900" fill="#fff" stroke="#292929" stroke-width="3.600"/>
<path d="M2849.8 253.8l7.4 7.2 7.4 -7.2" stroke="#fff" stroke-width="1.8" stroke-linecap="round" stroke-linejoin="round"/>
<path d="M2870.500 295.300l5.500-7.800 5.500 7.800z" fill="#9d9d9d" stroke="#9d9d9d" stroke-width="2" stroke-linejoin="round"/>
<path d="M2870.500 1655.200l5.500 7.800 5.500-7.800z" fill="#9d9d9d" stroke="#9d9d9d" stroke-width="2" stroke-linejoin="round"/>
<path d="M54.600 1685.800l-7.800 7.600 7.800 7.600" stroke="#7d7d7d" stroke-width="1.700" stroke-linecap="round" stroke-linejoin="round"/>
<path d="M96 1685.800l7.800 7.600-7.800 7.600" stroke="#e6e6e6" stroke-width="1.700" stroke-linecap="round" stroke-linejoin="round"/>
<path d="M1603.800 1670.200v8a8 8 0 0 0-8-8z" fill="#fff"/><path d="M1718.400 1670.200v8a8 8 0 0 1 8-8z" fill="#fff"/>
<circle cx="2089" cy="1693" r="2.200" fill="#fff"/><circle cx="2095.300" cy="1693" r="2.200" fill="#fff"/><circle cx="2101.600" cy="1693" r="2.200" fill="#fff"/>
<path d="M2135.500 1693h16.500M2143.700 1684.800v16.500" stroke="#fff" stroke-width="1.700"/>
<circle cx="2191.500" cy="1688.500" r="1.700" fill="#fff"/><circle cx="2191.500" cy="1694.700" r="1.700" fill="#fff"/><circle cx="2191.500" cy="1700.900" r="1.700" fill="#fff"/>
<path d="M2232.500 1688.300l-7.800 5.400 7.800 5.400z" fill="#9d9d9d" stroke="#9d9d9d" stroke-width="1.800" stroke-linejoin="round"/>
<path d="M2843.300 1688.300l7.800 5.400-7.800 5.400z" fill="#9d9d9d" stroke="#9d9d9d" stroke-width="1.800" stroke-linejoin="round"/>
<path d="M99.800 1727.500h20v6M99.800 1727.500v17.500h8M99.800 1731.500h20M103.300 1735.800h5M103.300 1739.800h3.500" stroke="#fff" stroke-width="1.500"/><circle cx="114.200" cy="1740.300" r="5.800" stroke="#fff" stroke-width="1.500"/><circle cx="114.200" cy="1740.300" r="2.300" fill="#fff"/>
<circle cx="155.500" cy="1727.300" r="2" stroke="#fff" stroke-width="1.300"/><path d="M147.500 1730.500c5.500 2.300 10.500 2.300 16 0M152.800 1732.200v5l-3.600 8M158.200 1732.200v5l1 2" stroke="#fff" stroke-width="1.400" stroke-linecap="round" stroke-linejoin="round"/><path d="M158.800 1737.800l8 8M166.800 1737.800l-8 8" stroke="#fff" stroke-width="1.400" stroke-linecap="round"/>
<path d="M2465.200 1725.300h18v17.600h-18zM2471.200 1725.300v17.600M2477.200 1725.300v17.600M2465.200 1731.200h18M2465.200 1737h18" stroke="#fff" stroke-width="2"/>
<rect x="2525" y="1725.300" width="20" height="17.600" stroke="#fff" stroke-width="2"/><rect x="2529.800" y="1729.300" width="10.400" height="10.800" stroke="#fff" stroke-width="1.700"/><path d="M2532 1733h6M2532 1736.500h6" stroke="#fff" stroke-width="1.500"/>
<path d="M2585.100 1725.300h20v17.600h-20zM2585.100 1736.500h13M2591.200 1725.300v11.200M2597.800 1725.300v11.200" stroke="#fff" stroke-width="2"/>
<path d="M2634 1734.800h10" stroke="#fff" stroke-width="1.400"/><path d="M2653 1734.800h148" stroke="#a0a0a0" stroke-width="1.200"/><rect x="2726.800" y="1727.500" width="7.700" height="15.700" rx="1.500" fill="#9d9d9d"/><path d="M2810 1734.800h10.500M2815.200 1729.500v10.500" stroke="#fff" stroke-width="1.400"/>
</svg>
</body></html>
